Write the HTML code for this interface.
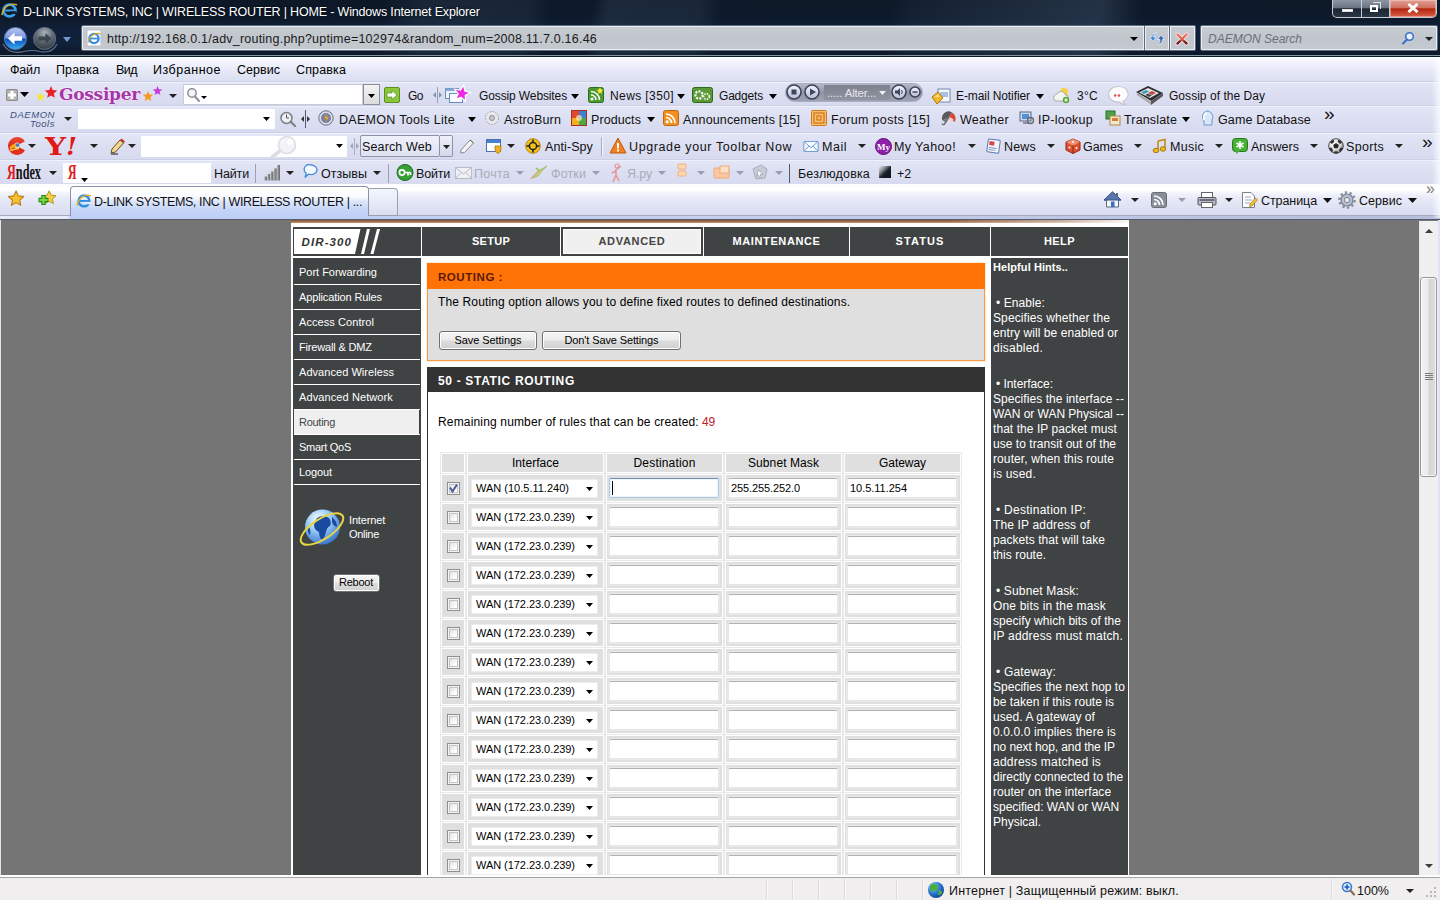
<!DOCTYPE html>
<html lang="ru"><head><meta charset="utf-8"><title>D-LINK SYSTEMS, INC | WIRELESS ROUTER | HOME</title>
<style>
html,body{margin:0;padding:0;}
body{width:1440px;height:900px;position:relative;overflow:hidden;background:#757575;font-family:"Liberation Sans","DejaVu Sans",sans-serif;font-size:12px;}
div,span.t,svg{position:absolute;box-sizing:border-box;}
span.t{white-space:pre;display:block;}

</style></head><body>
<div style="left:0px;top:0px;width:1440px;height:57px;background:linear-gradient(to bottom,#0d1827 0,#0e1b2d 20px,#10203a 30px,#10213a 44px,#0d1828 55px,#8494a2 55px,#8494a2 56px,#0d1828 56px);"></div>
<div style="left:0px;top:0px;width:1440px;height:55px;background:linear-gradient(100deg,rgba(100,125,150,0) 380px,rgba(100,125,150,.14) 420px,rgba(100,125,150,.12) 520px,rgba(100,125,150,0) 545px,rgba(100,125,150,0) 585px,rgba(100,125,150,.16) 600px,rgba(100,125,150,.14) 690px,rgba(100,125,150,0) 712px,rgba(100,125,150,0) 880px,rgba(100,125,150,.08) 900px,rgba(100,125,150,.26) 1085px,rgba(100,125,150,0) 1125px);"></div>
<span class="t" style="left:23px;top:3.5px;height:16px;line-height:16px;font-size:12.5px;color:#fff;text-shadow:0 0 3px rgba(0,0,0,.8);letter-spacing:-0.17px;">D-LINK SYSTEMS, INC | WIRELESS ROUTER | HOME - Windows Internet Explorer</span>
<svg style="left:1px;top:2px" width="17" height="17" viewBox="0 0 20 19"><circle cx="10" cy="9.5" r="7" fill="none" stroke="#3aa0e8" stroke-width="3.2"/><rect x="5" y="8.3" width="11" height="2.4" fill="#3aa0e8"/><rect x="11" y="10.5" width="7" height="3" fill="#111925"/><path d="M1 15 C3 4 12 0 19 3" stroke="#e8b020" stroke-width="1.6" fill="none"/></svg>
<div style="left:1332px;top:0px;width:105px;height:18px;border:1px solid #c4ccd8;border-top:none;border-radius:0 0 5px 5px;background:linear-gradient(to bottom,#8e96a4 0,#6a7484 45%,#1c2532 52%,#2a3646 100%);"></div>
<div style="left:1390px;top:0px;width:46px;height:17px;border-radius:0 0 4px 0;background:linear-gradient(to bottom,#e0a094 0,#d07060 45%,#b4260e 52%,#d8604a 100%);box-shadow:inset 0 0 0 1px rgba(255,220,210,.45);"></div>
<div style="left:1361px;top:0px;width:1px;height:17px;background:#c4ccd8;"></div>
<div style="left:1389px;top:0px;width:1px;height:17px;background:#c4ccd8;"></div>
<div style="left:1342px;top:9px;width:11px;height:3px;background:#fff;border:1px solid #ddd;"></div>
<div style="left:1370px;top:5px;width:8px;height:7px;border:2px solid #fff;"></div>
<div style="left:1373px;top:2px;width:8px;height:7px;border:1px solid #ddd;border-left:none;border-bottom:none;"></div>
<svg style="left:1407px;top:3px" width="12" height="10" viewBox="0 0 12 10"><path d="M1.500 1 L10.500 9 M10.500 1 L1.500 9" stroke="#fff" stroke-width="3"/></svg>
<svg style="left:0px;top:24px" width="60" height="32" viewBox="0 0 60 32"><defs><linearGradient id="gb" x1="0" y1="0" x2="0" y2="1"><stop offset="0" stop-color="#b8c6f0"/><stop offset=".47" stop-color="#8098e0"/><stop offset=".53" stop-color="#0e50c0"/><stop offset="1" stop-color="#38b0f4"/></linearGradient>
<radialGradient id="gf" cx=".5" cy=".25" r=".8"><stop offset="0" stop-color="#aab4bf"/><stop offset=".5" stop-color="#5d6671"/><stop offset="1" stop-color="#2c333c"/></radialGradient></defs>
<path d="M3 20 Q9 31 24 27.500 Q32 25.500 40 27.500 Q52 30 57 20" stroke="#5f7390" stroke-width="1.200" fill="none"/>
<circle cx="15.400" cy="14.500" r="11" fill="url(#gb)" stroke="#5878b0" stroke-width="1"/>
<path d="M8 14.500 L14.500 8.500 V12.300 H22 V16.700 H14.500 V20.500 Z" fill="#fff"/>
<circle cx="44.600" cy="14.500" r="11" fill="url(#gf)" stroke="#6a7480" stroke-width="1"/>
<path d="M51.500 14.500 L45.500 9 V12.500 H38.500 V16.500 H45.500 V20 Z" fill="#3e4650"/></svg>
<svg style="left:62.5px;top:36.5px" width="8" height="5" viewBox="0 0 8 5"><polygon points="0,0 8,0 4,5" fill="#6f9ad0"/></svg>
<div style="left:81px;top:25px;width:1064px;height:26px;background:linear-gradient(to bottom,#c8ccd3 0,#c1c6cd 50%,#c5c9d0 100%);border:1px solid #5f6a78;border-radius:2px 0 0 2px;box-shadow:inset 0 0 0 1px rgba(240,245,255,.85);"></div>
<svg style="left:86px;top:29px" width="17" height="18" viewBox="0 0 17 18"><rect x="1" y="1" width="14" height="16" fill="#fff" stroke="#b8c0cc"/><circle cx="8" cy="9.5" r="4.6" fill="none" stroke="#3a8fe0" stroke-width="2.4"/><rect x="4" y="8.6" width="8" height="1.8" fill="#3a8fe0"/><path d="M2 14 C3 7 9 3 15 5" stroke="#e0a820" stroke-width="1.2" fill="none"/></svg>
<span class="t" style="left:107px;top:31px;height:16px;line-height:16px;font-size:12.5px;color:#1a1a1a;letter-spacing:0.22px;">http://192.168.0.1/adv_routing.php?uptime=102974&amp;random_num=2008.11.7.0.16.46</span>
<svg style="left:1130px;top:37px" width="8" height="4" viewBox="0 0 8 4"><polygon points="0,0 8,0 4,4" fill="#000"/></svg>
<div style="left:1145px;top:25px;width:25px;height:26px;background:linear-gradient(to bottom,#c8ccd3 0,#c1c6cd 50%,#c5c9d0 100%);border:1px solid #5f6a78;border-left:none;box-shadow:inset 0 0 0 1px rgba(240,245,255,.85);"></div>
<div style="left:1170px;top:25px;width:26px;height:26px;background:linear-gradient(to bottom,#c8ccd3 0,#c1c6cd 50%,#c5c9d0 100%);border:1px solid #5f6a78;border-left:none;border-radius:0 2px 2px 0;box-shadow:inset 0 0 0 1px rgba(240,245,255,.85);"></div>
<svg style="left:1148px;top:30px" width="18" height="17" viewBox="0 0 18 17"><path d="M8.500 2 Q5.500 4 5.500 7 H8.500 L5 11.500 L1.500 7 H3.500 Q4 3 8.500 2z" fill="#4a8ad4" stroke="#dff0ff" stroke-width=".8"/><path d="M10 15 Q12.500 12.500 12 9.500 H9.500 L13 5 L16.500 9.500 H14.500 Q14.500 13.500 10 15z" fill="#3a66b0" stroke="#dff0ff" stroke-width=".8"/></svg>
<svg style="left:1175px;top:32px" width="14" height="14" viewBox="0 0 14 14"><defs><linearGradient id="gx" x1="0" y1="0" x2="0" y2="1"><stop offset="0" stop-color="#e87868"/><stop offset=".6" stop-color="#d86050"/><stop offset=".75" stop-color="#7a2424"/><stop offset="1" stop-color="#5a1818"/></linearGradient></defs><path d="M2.500 2.500 L11.500 11.500 M11.500 2.500 L2.500 11.500" stroke="#fbe0e0" stroke-width="4" stroke-linecap="round"/><path d="M2.500 2.500 L11.500 11.500 M11.500 2.500 L2.500 11.500" stroke="url(#gx)" stroke-width="2.400" stroke-linecap="round"/></svg>
<div style="left:1200px;top:25px;width:238px;height:26px;background:linear-gradient(to bottom,#c8ccd3 0,#c1c6cd 50%,#c5c9d0 100%);border:1px solid #5f6a78;border-radius:2px;box-shadow:inset 0 0 0 1px rgba(240,245,255,.85);"></div>
<span class="t" style="left:1208px;top:31px;height:16px;line-height:16px;font-size:12px;color:#6a6f78;font-style:italic;letter-spacing:-0.00px;">DAEMON Search</span>
<svg style="left:1401px;top:31px" width="14" height="14" viewBox="0 0 14 14"><circle cx="8.5" cy="5.5" r="3.8" fill="#e8f0ff" stroke="#3a6fc8" stroke-width="1.6"/><path d="M6 8.5 L2 12.5" stroke="#3a6fc8" stroke-width="2" stroke-linecap="round"/></svg>
<svg style="left:1425px;top:37px" width="8" height="4" viewBox="0 0 8 4"><polygon points="0,0 8,0 4,4" fill="#222"/></svg>
<div style="left:0px;top:57px;width:1440px;height:1px;background:#fbfcff;"></div>
<div style="left:0px;top:58px;width:1440px;height:24px;background:linear-gradient(to bottom,#f8f9fe 0,#eceefa 35%,#e1e4f4 75%,#dcdff1 100%);border-bottom:1px solid #cdd1e5;"></div>
<span class="t" style="left:10px;top:62px;height:16px;line-height:16px;font-size:12.5px;color:#000;letter-spacing:-0.18px;">Файл</span>
<span class="t" style="left:56px;top:62px;height:16px;line-height:16px;font-size:12.5px;color:#000;letter-spacing:0.13px;">Правка</span>
<span class="t" style="left:116px;top:62px;height:16px;line-height:16px;font-size:12.5px;color:#000;letter-spacing:-0.54px;">Вид</span>
<span class="t" style="left:153px;top:62px;height:16px;line-height:16px;font-size:12.5px;color:#000;letter-spacing:0.52px;">Избранное</span>
<span class="t" style="left:237px;top:62px;height:16px;line-height:16px;font-size:12.5px;color:#000;letter-spacing:0.03px;">Сервис</span>
<span class="t" style="left:296px;top:62px;height:16px;line-height:16px;font-size:12.5px;color:#000;letter-spacing:0.14px;">Справка</span>
<div style="left:0px;top:82px;width:1440px;height:24px;background:linear-gradient(to bottom,#e3e6f6 0,#dcdff2 50%,#d8dbef 100%);border-bottom:1px solid #ccd0e4;box-shadow:inset 0 1px 0 #eef0fb;"></div>
<div style="left:0px;top:106px;width:1440px;height:27px;background:linear-gradient(to bottom,#e3e6f6 0,#dcdff2 50%,#d8dbef 100%);border-bottom:1px solid #ccd0e4;box-shadow:inset 0 1px 0 #eef0fb;"></div>
<div style="left:0px;top:133px;width:1440px;height:27px;background:linear-gradient(to bottom,#e3e6f6 0,#dcdff2 50%,#d8dbef 100%);border-bottom:1px solid #ccd0e4;box-shadow:inset 0 1px 0 #eef0fb;"></div>
<div style="left:0px;top:160px;width:1440px;height:25px;background:linear-gradient(to bottom,#e3e6f6 0,#dcdff2 50%,#d8dbef 100%);border-bottom:1px solid #ccd0e4;box-shadow:inset 0 1px 0 #eef0fb;"></div>
<svg style="left:5px;top:87.0px" width="14" height="16" viewBox="0 0 14 16"><rect x="1" y="2" width="12" height="12" rx="1.500" fill="#8e8e8e"/><rect x="2" y="3" width="10" height="10" rx="1" fill="#b4b4b0"/><path d="M7 4 V12 M3 8 H11" stroke="#fff" stroke-width="3.200"/></svg>
<svg style="left:19.5px;top:92px" width="9" height="5" viewBox="0 0 9 5"><polygon points="0,0 9,0 4.5,5" fill="#000"/></svg>
<svg style="left:34px;top:84px" width="132" height="22" viewBox="0 0 132 22"><polygon points="6.5,8.0 7.8,11.2 11.3,11.5 8.6,13.7 9.4,17.0 6.5,15.2 3.6,17.0 4.4,13.7 1.7,11.5 5.2,11.2" fill="#f2e63a"/><polygon points="17.0,2.0 18.7,6.1 23.2,6.5 19.8,9.4 20.8,13.8 17.0,11.4 13.2,13.8 14.2,9.4 10.8,6.5 15.3,6.1" fill="#e8202a"/><polygon points="114.0,7.0 115.5,10.5 119.2,10.8 116.4,13.3 117.2,16.9 114.0,15.0 110.8,16.9 111.6,13.3 108.8,10.8 112.5,10.5" fill="#f59a20"/><polygon points="123.5,2.0 124.8,5.2 128.3,5.5 125.6,7.7 126.4,11.0 123.5,9.2 120.6,11.0 121.4,7.7 118.7,5.5 122.2,5.2" fill="#c83ae0"/></svg>
<span class="t" style="left:59px;top:83px;height:22px;line-height:22px;font-size:17px;color:#a436a8;font-family:'DejaVu Serif','Liberation Serif',serif;font-weight:bold;text-shadow:0 0 2px #fff,0 0 2px #fff,1px 1px 0 #e8b8e8;letter-spacing:-0.27px;">Gossiper</span>
<svg style="left:169px;top:94px" width="8" height="4" viewBox="0 0 8 4"><polygon points="0,0 8,0 4,4" fill="#222"/></svg>
<div style="left:183px;top:84px;width:180px;height:21px;background:#fff;border:1px solid #c8ccd8;"></div>
<svg style="left:186px;top:87.0px" width="15" height="16" viewBox="0 0 15 16"><circle cx="6" cy="6" r="4.200" fill="#f4f6f8" stroke="#8a8f98" stroke-width="1.500"/><path d="M9 9.500 L13 14" stroke="#8a8f98" stroke-width="2" stroke-linecap="round"/></svg>
<svg style="left:201px;top:95.5px" width="6" height="3" viewBox="0 0 6 3"><polygon points="0,0 6,0 3,3" fill="#000"/></svg>
<div style="left:363px;top:84px;width:17px;height:21px;background:linear-gradient(#f4f4f4,#dcdcdc);border:1px solid #8a8f98;"></div>
<svg style="left:368px;top:94px" width="7" height="4" viewBox="0 0 7 4"><polygon points="0,0 7,0 3.5,4" fill="#000"/></svg>
<svg style="left:384px;top:87.0px" width="16" height="16" viewBox="0 0 16 16"><rect x="0.500" y="0.500" width="15" height="15" rx="1.500" fill="#8cc63a" stroke="#5a9020"/><path d="M3 6 H8 V3.500 L13 8 L8 12.500 V10 H3 Z" fill="#fff" stroke="#4a8018" stroke-width=".6"/></svg>
<span class="t" style="left:408px;top:88px;height:16px;line-height:16px;font-size:12px;color:#111;letter-spacing:-0.51px;">Go</span>
<div style="left:437px;top:87px;width:1px;height:16px;background:#9aa0b8;"></div>
<svg style="left:433px;top:91px" width="9" height="8" viewBox="0 0 9 8"><polygon points="0,4 3,1 3,7" fill="#8a90a8"/><polygon points="9,4 6,1 6,7" fill="#8a90a8"/></svg>
<svg style="left:444px;top:83px" width="28" height="23" viewBox="0 0 28 23"><rect x="1.500" y="5.500" width="13" height="10" fill="#eef4fc" stroke="#6a8cc0"/><rect x="1.500" y="5.500" width="13" height="2.500" fill="#88a8d8"/><rect x="5.500" y="10.500" width="13" height="9" fill="#f8fbff" stroke="#6a8cc0"/><polygon points="18.0,2.0 20.2,7.4 26.1,7.9 21.6,11.7 23.0,17.4 18.0,14.3 13.0,17.4 14.4,11.7 9.9,7.9 15.8,7.4" fill="#f028e0" stroke="#fff" stroke-width="1.2" transform="rotate(12 18 10.5)"/></svg>
<span class="t" style="left:479px;top:88px;height:16px;line-height:16px;font-size:12px;color:#111;letter-spacing:-0.12px;">Gossip Websites</span>
<svg style="left:571px;top:93.5px" width="8" height="5" viewBox="0 0 8 5"><polygon points="0,0 8,0 4,5" fill="#000"/></svg>
<svg style="left:588px;top:87.0px" width="16" height="16" viewBox="0 0 16 16"><rect x="0.500" y="0.500" width="15" height="15" rx="2" fill="#4a9a30" stroke="#2a7018"/><circle cx="4" cy="12" r="1.600" fill="#fff"/><path d="M3 8 A5 5 0 0 1 8 13 M3 4.500 A8.500 8.500 0 0 1 11.500 13" stroke="#fff" stroke-width="1.600" fill="none"/><polygon points="12,0 13,2.500 15.500,3 13.500,4.500 14,7 12,5.500 10,7 10.500,4.500 8.500,3 11,2.500" fill="#ffe83a"/></svg>
<span class="t" style="left:610px;top:88px;height:16px;line-height:16px;font-size:12px;color:#111;letter-spacing:0.40px;">News [350]</span>
<svg style="left:677px;top:93.5px" width="8" height="5" viewBox="0 0 8 5"><polygon points="0,0 8,0 4,5" fill="#000"/></svg>
<svg style="left:692px;top:86px" width="21" height="18" viewBox="0 0 21 18"><rect x="0.500" y="1.500" width="20" height="15" rx="2" fill="#5a9838" stroke="#2f6a18"/><circle cx="7" cy="9" r="3.600" fill="none" stroke="#fff" stroke-width="2.200" stroke-dasharray="2 1.200"/><circle cx="14.500" cy="10.500" r="2.800" fill="none" stroke="#e8f4d8" stroke-width="1.800" stroke-dasharray="1.600 1"/></svg>
<span class="t" style="left:719px;top:88px;height:16px;line-height:16px;font-size:12px;color:#111;letter-spacing:-0.20px;">Gadgets</span>
<svg style="left:769px;top:93.5px" width="8" height="5" viewBox="0 0 8 5"><polygon points="0,0 8,0 4,5" fill="#000"/></svg>
<div style="left:785px;top:83px;width:138px;height:19px;border-radius:10px;background:linear-gradient(#b6bac8 0,#9095a6 50%,#9ea3b3 100%);border:1px solid #a8acbe;"></div>
<div style="left:824px;top:85px;width:66px;height:15px;background:linear-gradient(#7d828e,#8f94a0);"></div>
<svg style="left:0px;top:0px" width="1" height="1" viewBox="0 0 1 1"><defs><linearGradient id="pb" x1="0" y1="0" x2="0" y2="1"><stop offset="0" stop-color="#f4f6fc"/><stop offset=".5" stop-color="#d4d8e8"/><stop offset="1" stop-color="#b8bed4"/></linearGradient></defs></svg>
<svg style="left:786px;top:83.5px" width="16" height="16" viewBox="0 0 16 16"><circle cx="8" cy="8" r="7" fill="url(#pb)" stroke="#3a4058" stroke-width="1.500"/><rect x="5.500" y="5.500" width="5" height="5" fill="#3f4660"/></svg>
<svg style="left:804px;top:83.5px" width="16" height="16" viewBox="0 0 16 16"><circle cx="8" cy="8" r="7" fill="url(#pb)" stroke="#3a4058" stroke-width="1.500"/><polygon points="6,4.500 12,8 6,11.500" fill="#3f4660"/></svg>
<span class="t" style="left:827px;top:84.5px;height:16px;line-height:16px;font-size:11.5px;color:#e4e6ee;letter-spacing:-0.15px;">..... Alter...</span>
<svg style="left:878.5px;top:91px" width="7" height="4" viewBox="0 0 7 4"><polygon points="0,0 7,0 3.5,4" fill="#f0f0f8"/></svg>
<svg style="left:891px;top:83.5px" width="16" height="16" viewBox="0 0 16 16"><circle cx="8" cy="8" r="7" fill="url(#pb)" stroke="#3a4058" stroke-width="1.500"/><polygon points="4,6.500 6.500,6.500 9,4 9,12 6.500,9.500 4,9.500" fill="#3f4660"/><path d="M10.500 6 Q12 8 10.500 10" stroke="#3f4660" fill="none"/></svg>
<svg style="left:909px;top:86px" width="12" height="12" viewBox="0 0 12 12"><circle cx="6" cy="6" r="5" fill="url(#pb)" stroke="#3a4058" stroke-width="1.500"/><rect x="3.500" y="5.300" width="5" height="1.500" fill="#3f4660"/></svg>
<svg style="left:931px;top:86px" width="21" height="19" viewBox="0 0 21 19"><rect x="7" y="3" width="12" height="13" fill="#f4f6fa" stroke="#7088b0"/><rect x="9" y="6" width="8" height="5" fill="#a8c0e8"/><polygon points="1,11 7,6 12,12 6,18" fill="#f0b830" stroke="#b07810"/><polygon points="3,11 7,8 9,11" fill="#ffe080"/></svg>
<span class="t" style="left:956px;top:88px;height:16px;line-height:16px;font-size:12px;color:#111;letter-spacing:-0.09px;">E-mail Notifier</span>
<svg style="left:1036px;top:93.5px" width="8" height="5" viewBox="0 0 8 5"><polygon points="0,0 8,0 4,5" fill="#000"/></svg>
<svg style="left:1051px;top:86px" width="21" height="18" viewBox="0 0 21 18"><circle cx="13" cy="6" r="4" fill="#f8d040"/><path d="M3 13 a3.500 3.500 0 0 1 3-5 a4.500 4.500 0 0 1 8.500 1 a3 3 0 0 1 0 6 H5 a2.500 2.500 0 0 1 -2-2z" fill="#f4f4f4" stroke="#a8a8a8"/><circle cx="15" cy="14" r="3.200" fill="#5aa830"/><path d="M15 12.300 V15.700 M13.300 14 H16.700" stroke="#fff" stroke-width="1.200"/></svg>
<span class="t" style="left:1077px;top:88px;height:16px;line-height:16px;font-size:12px;color:#111;letter-spacing:0.29px;">3°C</span>
<svg style="left:1107px;top:85px" width="23" height="20" viewBox="0 0 23 20"><path d="M11.500 1.500 a9.500 7.800 0 0 1 4.500 14.700 q1 2.500 3 3.300 q-4 .3 -6.500 -2.500 a9.500 7.800 0 1 1 -1 -15.500z" fill="#fcfcfc" stroke="#c4c6cc" stroke-width="1.200"/><circle cx="8.200" cy="10.500" r="1.200" fill="#e04848"/><circle cx="12" cy="10.500" r="1.200" fill="#e04848"/></svg>
<svg style="left:1134px;top:84px" width="30" height="22" viewBox="0 0 30 22"><polygon points="2,8 14,2 29,9 17,17" fill="#2e2e30"/><polygon points="5,8.500 14,4 25,9 16,14" fill="#e4e4e6"/><polygon points="7,8.500 12,6 15,7.500 10,10" fill="#3a9ab0"/><polygon points="14,9 18,7 22,9 18,11" fill="#c04848"/><polygon points="11,11 15,13 18,11.500 14,9.500" fill="#4a4a50"/><polygon points="2,8 17,17 17,21 3,11" fill="#c8c8cc"/><polygon points="17,17 29,9 29,12 17,21" fill="#58585c"/><path d="M3 9.500 L17 18.500 M3 10.500 L17 20" stroke="#88888c" stroke-width=".6"/></svg>
<span class="t" style="left:1169px;top:88px;height:16px;line-height:16px;font-size:12px;color:#111;letter-spacing:0.04px;">Gossip of the Day</span>
<span class="t" style="left:10px;top:109px;height:11px;line-height:11px;font-size:9.5px;color:#3a4f7c;font-style:italic;letter-spacing:0.55px;">DAEMON</span>
<span class="t" style="left:30px;top:117.5px;height:11px;line-height:11px;font-size:9.5px;color:#3a4f7c;font-style:italic;letter-spacing:0.53px;">Tools</span>
<svg style="left:64px;top:117px" width="8" height="4" viewBox="0 0 8 4"><polygon points="0,0 8,0 4,4" fill="#222"/></svg>
<div style="left:78px;top:109px;width:197px;height:20px;background:#fff;"></div>
<svg style="left:262.5px;top:117px" width="7" height="4" viewBox="0 0 7 4"><polygon points="0,0 7,0 3.5,4" fill="#000"/></svg>
<svg style="left:279px;top:110px" width="18" height="18" viewBox="0 0 18 18"><circle cx="7.500" cy="8" r="5.500" fill="#eef0f4" stroke="#7a8088" stroke-width="1.500"/><path d="M7.500 4.500 V8 H10" stroke="#555" fill="none"/><path d="M12 12 L16 16" stroke="#7a8088" stroke-width="2.200" stroke-linecap="round"/></svg>
<div style="left:305px;top:110px;width:1px;height:18px;background:#555a70;"></div>
<svg style="left:301px;top:115px" width="9" height="8" viewBox="0 0 9 8"><polygon points="0,4 3,1 3,7" fill="#333"/><polygon points="9,4 6,1 6,7" fill="#333"/></svg>
<svg style="left:318px;top:110.0px" width="16" height="16" viewBox="0 0 16 16"><circle cx="8" cy="8" r="7.200" fill="#d8dce8" stroke="#6a7088"/><circle cx="8" cy="8" r="5" fill="#7a80a0"/><path d="M9 3 L6 8.500 H8.500 L7 13 L11 7 H8.500 Z" fill="#f0a020"/></svg>
<span class="t" style="left:339px;top:112px;height:16px;line-height:16px;font-size:12.5px;color:#111;letter-spacing:0.30px;">DAEMON Tools Lite</span>
<svg style="left:468px;top:116.5px" width="8" height="5" viewBox="0 0 8 5"><polygon points="0,0 8,0 4,5" fill="#000"/></svg>
<svg style="left:484px;top:110.0px" width="16" height="16" viewBox="0 0 16 16"><circle cx="8" cy="8" r="6.500" fill="#e8e8ec" stroke="#a8a8b0" stroke-dasharray="2 1"/><circle cx="8" cy="8" r="2.500" fill="#c8c8d0" stroke="#909098"/></svg>
<span class="t" style="left:504px;top:112px;height:16px;line-height:16px;font-size:12.5px;color:#111;letter-spacing:0.16px;">AstroBurn</span>
<svg style="left:571px;top:110.0px" width="16" height="16" viewBox="0 0 16 16"><rect x="0.500" y="0.500" width="15" height="15" fill="#e04830" stroke="#a83020"/><rect x="1" y="8" width="7" height="7" fill="#f0b020"/><rect x="8" y="8" width="7" height="7" fill="#50a840"/><rect x="8" y="1" width="7" height="7" fill="#4080d0"/><circle cx="8" cy="8" r="3" fill="#f8e8c0" opacity=".7"/></svg>
<span class="t" style="left:591px;top:112px;height:16px;line-height:16px;font-size:12.5px;color:#111;letter-spacing:0.08px;">Products</span>
<svg style="left:647px;top:116.5px" width="8" height="5" viewBox="0 0 8 5"><polygon points="0,0 8,0 4,5" fill="#000"/></svg>
<svg style="left:663px;top:110.0px" width="16" height="16" viewBox="0 0 16 16"><rect x="0.500" y="0.500" width="15" height="15" rx="2" fill="#f09020" stroke="#c06810"/><circle cx="4.200" cy="11.800" r="1.600" fill="#fff"/><path d="M3 7.500 A5.500 5.500 0 0 1 8.500 13 M3 4 A9 9 0 0 1 12 13" stroke="#fff" stroke-width="1.700" fill="none"/></svg>
<span class="t" style="left:683px;top:112px;height:16px;line-height:16px;font-size:12.5px;color:#111;letter-spacing:0.13px;">Announcements [15]</span>
<svg style="left:811px;top:110.0px" width="16" height="16" viewBox="0 0 16 16"><rect x="0.500" y="0.500" width="15" height="15" rx="1" fill="#f8c070" stroke="#d07818"/><rect x="3" y="3" width="10" height="10" fill="none" stroke="#d07818" stroke-width="1.300"/><rect x="6" y="6" width="4" height="4" fill="none" stroke="#d07818" stroke-width="1.300"/></svg>
<span class="t" style="left:831px;top:112px;height:16px;line-height:16px;font-size:12.5px;color:#111;letter-spacing:0.33px;">Forum posts [15]</span>
<svg style="left:941px;top:110.0px" width="16" height="16" viewBox="0 0 16 16"><path d="M1.500 10.500 A6.500 6.500 0 0 1 11 2.500 L8 7 Z" fill="#5a5a5e"/><path d="M11 2.500 A6.500 6.500 0 0 1 13.500 12 L8 7 Z" fill="#d84838"/><path d="M1.500 10.500 L8 7 L5 12.500 Z" fill="#7a7a80"/><rect x="8.500" y="8" width="4" height="3" fill="#f4d0c8" transform="rotate(35 10 9)"/><path d="M8 7 L3.500 14 q-1.500 1.500 -2.500 -.5" stroke="#6a6a6e" stroke-width="1.400" fill="none"/></svg>
<span class="t" style="left:960px;top:112px;height:16px;line-height:16px;font-size:12.5px;color:#111;letter-spacing:0.28px;">Weather</span>
<svg style="left:1019px;top:110.0px" width="16" height="16" viewBox="0 0 16 16"><rect x="1" y="2" width="11" height="9" fill="#c8d8f0" stroke="#5a6a88"/><rect x="3" y="4" width="7" height="5" fill="#5890d8"/><rect x="4" y="12" width="6" height="2" fill="#8890a0"/><circle cx="11.500" cy="10.500" r="3" fill="none" stroke="#666" stroke-width="1.300"/></svg>
<span class="t" style="left:1038px;top:112px;height:16px;line-height:16px;font-size:12.5px;color:#111;letter-spacing:0.24px;">IP-lookup</span>
<svg style="left:1105px;top:110.0px" width="16" height="16" viewBox="0 0 16 16"><rect x="1" y="1" width="9" height="8" fill="#50a048" stroke="#2a7028"/><rect x="5" y="6" width="10" height="9" fill="#f0e8d0" stroke="#b08840"/><rect x="7" y="8" width="6" height="3" fill="#e07830"/></svg>
<span class="t" style="left:1124px;top:112px;height:16px;line-height:16px;font-size:12.5px;color:#111;letter-spacing:0.15px;">Translate</span>
<svg style="left:1182px;top:116.5px" width="8" height="5" viewBox="0 0 8 5"><polygon points="0,0 8,0 4,5" fill="#000"/></svg>
<svg style="left:1199px;top:110.0px" width="16" height="16" viewBox="0 0 16 16"><path d="M8 1 a6 6 0 0 1 5 9 l0 5 h-8 l0 -4 a6 6 0 0 1 3 -10z" fill="#d8e8f8" stroke="#6a98c8"/><path d="M8 3 a4 5 0 0 0 -3 7" stroke="#fff" stroke-width="1.500" fill="none"/></svg>
<span class="t" style="left:1218px;top:112px;height:16px;line-height:16px;font-size:12.5px;color:#111;letter-spacing:0.15px;">Game Database</span>
<span class="t" style="left:1324px;top:105px;height:18px;line-height:18px;font-size:19px;color:#111;">»</span>
<svg style="left:7px;top:136px" width="20" height="20" viewBox="0 0 20 20"><defs><linearGradient id="yc" x1="0" y1="0" x2="0" y2="1"><stop offset="0" stop-color="#f04838"/><stop offset=".55" stop-color="#d82818"/><stop offset="1" stop-color="#e83020"/></linearGradient></defs><path d="M10 1 a9 9 0 1 0 8 13.200 L12.500 11.500 a3 3 0 1 1 0 -3.500 L18 5.500 A9 9 0 0 0 10 1z" fill="url(#yc)"/><path d="M2.500 11 q4 -4.500 9 -3 l1.500 1.500 q-1 1.500 -3 1.500 q-4 0 -7 2.500z" fill="#f8b020"/><path d="M3 14.500 q5 -1.500 9 -2" stroke="#f8d040" stroke-width="1.400" fill="none"/><circle cx="10.500" cy="9" r="1.800" fill="#4878c0"/></svg>
<svg style="left:28px;top:144px" width="8" height="4" viewBox="0 0 8 4"><polygon points="0,0 8,0 4,4" fill="#222"/></svg>
<svg style="left:44px;top:135px" width="36" height="23" viewBox="0 0 36 23"><text x="1" y="19.500" font-family="DejaVu Serif,Liberation Serif,serif" font-weight="bold" font-size="24" fill="#e01818" textLength="21" lengthAdjust="spacingAndGlyphs">Y</text><text x="22" y="19.500" font-family="DejaVu Serif,Liberation Serif,serif" font-weight="bold" font-style="italic" font-size="24" fill="#e01818" textLength="11" lengthAdjust="spacingAndGlyphs">!</text></svg>
<svg style="left:90px;top:144px" width="8" height="4" viewBox="0 0 8 4"><polygon points="0,0 8,0 4,4" fill="#222"/></svg>
<svg style="left:109px;top:137px" width="18" height="18" viewBox="0 0 18 18"><polygon points="3,12 11,3 14.500,6 6.500,15 2,16" fill="#f0d890" stroke="#6a5020" stroke-width="1"/><polygon points="11,3 12.500,1.500 16,4.500 14.500,6" fill="#c03030"/><path d="M2 17 H9" stroke="#333" stroke-width="1.200"/></svg>
<svg style="left:128px;top:144px" width="8" height="4" viewBox="0 0 8 4"><polygon points="0,0 8,0 4,4" fill="#222"/></svg>
<div style="left:141px;top:136px;width:206px;height:21px;background:#fff;"></div>
<svg style="left:268px;top:136px" width="34" height="21" viewBox="0 0 34 21"><circle cx="19" cy="9" r="8.500" fill="#f2f3f6" stroke="#dcdde4" stroke-width="1.500"/><path d="M12 15 L4 21" stroke="#dcdde4" stroke-width="3.500" stroke-linecap="round"/><circle cx="22" cy="6" r="3" fill="#fff"/></svg>
<svg style="left:335.5px;top:144px" width="7" height="4" viewBox="0 0 7 4"><polygon points="0,0 7,0 3.5,4" fill="#000"/></svg>
<div style="left:354px;top:138px;width:1px;height:17px;background:#a8acc0;"></div>
<svg style="left:350px;top:142px" width="9" height="8" viewBox="0 0 9 8"><polygon points="0,4 3,1 3,7" fill="#a0a4b8"/><polygon points="9,4 6,1 6,7" fill="#a0a4b8"/></svg>
<div style="left:360px;top:135px;width:80px;height:22px;border:1px solid #8d93a8;border-radius:2px;background:linear-gradient(#eef0fa,#dfe2f2);"></div>
<div style="left:440px;top:135px;width:13px;height:22px;border:1px solid #8d93a8;border-left:none;border-radius:0 2px 2px 0;background:linear-gradient(#eef0fa,#d4d7e8);"></div>
<span class="t" style="left:362px;top:139px;height:16px;line-height:16px;font-size:12.5px;color:#111;letter-spacing:0.14px;">Search Web</span>
<svg style="left:443px;top:145px" width="7" height="4" viewBox="0 0 7 4"><polygon points="0,0 7,0 3.5,4" fill="#222"/></svg>
<svg style="left:459px;top:137px" width="17" height="17" viewBox="0 0 17 17"><polygon points="2,13 11,3 14.500,6 5.500,15.500 1.500,16" fill="#f4f4f6" stroke="#8a8a92" stroke-width="1"/><path d="M11 3 L14.500 6" stroke="#666"/></svg>
<svg style="left:486px;top:138.0px" width="16" height="16" viewBox="0 0 16 16"><rect x="0.500" y="1.500" width="14" height="12" fill="#fff" stroke="#4a70b0"/><rect x="1" y="2" width="13" height="3" fill="#4a80d0"/><path d="M9 8 h6 v3 q0 3 -3 4.500 q-3 -1.500 -3 -4.500z" fill="#f0b020" stroke="#b07810" stroke-width=".8"/></svg>
<svg style="left:507px;top:144px" width="8" height="4" viewBox="0 0 8 4"><polygon points="0,0 8,0 4,4" fill="#222"/></svg>
<svg style="left:525px;top:138.0px" width="16" height="16" viewBox="0 0 16 16"><circle cx="8" cy="8" r="7.300" fill="#f4c020" stroke="#b88810"/><circle cx="8" cy="8" r="3.600" fill="none" stroke="#222" stroke-width="1.500"/><path d="M8 1.500 V5 M8 11 V14.500 M1.500 8 H5 M11 8 H14.500" stroke="#222" stroke-width="1.500"/></svg>
<span class="t" style="left:545px;top:139px;height:16px;line-height:16px;font-size:12.5px;color:#111;letter-spacing:0.09px;">Anti-Spy</span>
<div style="left:601px;top:137px;width:1px;height:19px;background:#a8acc0;"></div>
<div style="left:602px;top:137px;width:1px;height:19px;background:#f4f5fc;"></div>
<svg style="left:609px;top:137px" width="18" height="17" viewBox="0 0 18 17"><polygon points="9,1 17,16 1,16" fill="#f08020" stroke="#c05808" stroke-linejoin="round"/><rect x="8" y="6" width="2" height="5.500" fill="#fff"/><rect x="8" y="12.500" width="2" height="2" fill="#fff"/></svg>
<span class="t" style="left:629px;top:139px;height:16px;line-height:16px;font-size:12.5px;color:#111;letter-spacing:0.61px;">Upgrade your Toolbar Now</span>
<svg style="left:803px;top:141px" width="16" height="11" viewBox="0 0 18 13"><rect x="0.500" y="0.500" width="17" height="12" rx="1" fill="#f4f8ff" stroke="#5a88c8"/><path d="M1 1 L9 8 L17 1 M1 12 L6.500 6 M17 12 L11.500 6" stroke="#5a88c8" fill="none"/></svg>
<span class="t" style="left:822px;top:139px;height:16px;line-height:16px;font-size:12.5px;color:#111;letter-spacing:0.52px;">Mail</span>
<svg style="left:858px;top:144px" width="8" height="4" viewBox="0 0 8 4"><polygon points="0,0 8,0 4,4" fill="#222"/></svg>
<svg style="left:875px;top:138px" width="17" height="17" viewBox="0 0 17 17"><circle cx="8.500" cy="8.500" r="8" fill="#9020a8" stroke="#60107a"/><text x="8.500" y="12" font-size="9" font-weight="bold" fill="#fff" text-anchor="middle" font-family="Liberation Serif,serif">My</text></svg>
<span class="t" style="left:894px;top:139px;height:16px;line-height:16px;font-size:12.5px;color:#111;letter-spacing:0.38px;">My Yahoo!</span>
<svg style="left:968px;top:144px" width="8" height="4" viewBox="0 0 8 4"><polygon points="0,0 8,0 4,4" fill="#222"/></svg>
<svg style="left:985px;top:138.0px" width="16" height="16" viewBox="0 0 16 16"><rect x="2.500" y="1.500" width="12" height="13" rx="1" transform="rotate(8 8 8)" fill="#f4f6fb" stroke="#5a78b0"/><rect x="4" y="3.500" width="5" height="4" fill="#d84848" transform="rotate(8 8 8)"/><path d="M4 10 H12 M4 12 H11" stroke="#7a90c0" transform="rotate(8 8 8)"/></svg>
<span class="t" style="left:1004px;top:139px;height:16px;line-height:16px;font-size:12.5px;color:#111;letter-spacing:0.18px;">News</span>
<svg style="left:1047px;top:144px" width="8" height="4" viewBox="0 0 8 4"><polygon points="0,0 8,0 4,4" fill="#222"/></svg>
<svg style="left:1065px;top:138.0px" width="16" height="16" viewBox="0 0 16 16"><polygon points="8,1 15,4 15,12 8,15.500 1,12 1,4" fill="#e05030" stroke="#902818"/><polygon points="8,1 15,4 8,7.500 1,4" fill="#f09070"/><path d="M8 7.500 V15.500" stroke="#902818"/><circle cx="4.500" cy="9.500" r="1" fill="#fff"/><circle cx="11.500" cy="10" r="1" fill="#fff"/><circle cx="8" cy="4" r="1" fill="#fff"/></svg>
<span class="t" style="left:1083px;top:139px;height:16px;line-height:16px;font-size:12.5px;color:#111;letter-spacing:-0.06px;">Games</span>
<svg style="left:1134px;top:144px" width="8" height="4" viewBox="0 0 8 4"><polygon points="0,0 8,0 4,4" fill="#222"/></svg>
<svg style="left:1152px;top:138.0px" width="16" height="16" viewBox="0 0 16 16"><path d="M6 3 L13 1.500 V11" stroke="#c08810" stroke-width="1.500" fill="none"/><path d="M6 3 V12.500" stroke="#c08810" stroke-width="1.500"/><ellipse cx="4" cy="12.500" rx="2.800" ry="2.200" fill="#f0b820" stroke="#a87810"/><ellipse cx="11" cy="11" rx="2.800" ry="2.200" fill="#f0b820" stroke="#a87810"/></svg>
<span class="t" style="left:1170px;top:139px;height:16px;line-height:16px;font-size:12.5px;color:#111;letter-spacing:0.27px;">Music</span>
<svg style="left:1215px;top:144px" width="8" height="4" viewBox="0 0 8 4"><polygon points="0,0 8,0 4,4" fill="#222"/></svg>
<svg style="left:1232px;top:138.0px" width="16" height="16" viewBox="0 0 16 16"><rect x="0.500" y="0.500" width="15" height="13" rx="3" fill="#48b038" stroke="#287818"/><polygon points="4,13 4,16 8,13" fill="#48b038"/><path d="M8 3 V11 M4.500 5 L11.500 9 M11.500 5 L4.500 9" stroke="#fff" stroke-width="1.600"/></svg>
<span class="t" style="left:1251px;top:139px;height:16px;line-height:16px;font-size:12.5px;color:#111;letter-spacing:0.01px;">Answers</span>
<svg style="left:1310px;top:144px" width="8" height="4" viewBox="0 0 8 4"><polygon points="0,0 8,0 4,4" fill="#222"/></svg>
<svg style="left:1328px;top:138.0px" width="16" height="16" viewBox="0 0 16 16"><defs><radialGradient id="sb" cx=".35" cy=".3" r=".8"><stop offset="0" stop-color="#ffffff"/><stop offset=".6" stop-color="#d8d8d8"/><stop offset="1" stop-color="#707070"/></radialGradient></defs><circle cx="8" cy="8" r="7.300" fill="url(#sb)" stroke="#3a3a3a" stroke-width=".9"/><polygon points="8,5 10.800,7 9.800,10.300 6.200,10.300 5.200,7" fill="#262626"/><path d="M2 4.500 q1.500 -2 3.500 -2.800 l1 1.800 -2.500 2.500z M14 4.500 q-1.500 -2 -3.500 -2.800 l-1 1.800 2.500 2.500z M1 10 l2.500 -.5 1.500 3 -1 1.500 q-2 -1.500 -3 -4z M15 10 l-2.500 -.5 -1.500 3 1 1.500 q2 -1.500 3 -4z M6 14 l2 -1 2 1 -.5 1.200 q-1.500 .4 -3 0z" fill="#303030"/></svg>
<span class="t" style="left:1346px;top:139px;height:16px;line-height:16px;font-size:12.5px;color:#111;letter-spacing:0.31px;">Sports</span>
<svg style="left:1395px;top:144px" width="8" height="4" viewBox="0 0 8 4"><polygon points="0,0 8,0 4,4" fill="#222"/></svg>
<span class="t" style="left:1422px;top:133px;height:18px;line-height:18px;font-size:19px;color:#111;">»</span>
<svg style="left:6px;top:162px" width="38" height="22" viewBox="0 0 38 22"><text x="1" y="17" font-family="Liberation Serif,serif" font-weight="bold" font-size="20" textLength="34" lengthAdjust="spacingAndGlyphs"><tspan fill="#e01818">Я</tspan><tspan fill="#111">ndex</tspan></text></svg>
<svg style="left:49px;top:171px" width="8" height="4" viewBox="0 0 8 4"><polygon points="0,0 8,0 4,4" fill="#222"/></svg>
<div style="left:63px;top:163px;width:148px;height:20px;background:#fff;"></div>
<svg style="left:67px;top:162px" width="12" height="22" viewBox="0 0 12 22"><text x="1" y="17" font-family="Liberation Serif,serif" font-weight="bold" font-size="20" fill="#e01818" textLength="8.500" lengthAdjust="spacingAndGlyphs">Я</text></svg>
<svg style="left:81px;top:178px" width="7" height="4" viewBox="0 0 7 4"><polygon points="0,0 7,0 3.5,4" fill="#000"/></svg>
<span class="t" style="left:214px;top:166px;height:16px;line-height:16px;font-size:12.5px;color:#111;letter-spacing:-0.13px;">Найти</span>
<div style="left:255px;top:164px;width:1px;height:19px;background:#9aa0b8;"></div>
<svg style="left:264px;top:164px" width="17" height="17" viewBox="0 0 17 17"><defs><linearGradient id="sg" x1="0" y1="0" x2="1" y2="0"><stop offset="0" stop-color="#a0a0a0"/><stop offset="1" stop-color="#6a6a6a"/></linearGradient></defs><g fill="url(#sg)"><rect x="0.500" y="12.500" width="2.600" height="4"/><rect x="3.700" y="10" width="2.600" height="6.500"/><rect x="6.900" y="7.500" width="2.600" height="9"/><rect x="10.100" y="4.500" width="2.600" height="12"/><rect x="13.300" y="1" width="2.700" height="15.500"/></g></svg>
<svg style="left:286px;top:171px" width="8" height="4" viewBox="0 0 8 4"><polygon points="0,0 8,0 4,4" fill="#222"/></svg>
<svg style="left:303px;top:164px" width="15" height="15" viewBox="0 0 15 15"><path d="M8 1 a6 4.800 0 0 1 0 9.600 q-1.300 0 -2.600 -.4 L2 13.500 L3.300 9.300 a4.800 4.800 0 0 1 4.700 -8.300z" fill="#f4f9ff" stroke="#4a8ad8" stroke-width="1.300"/></svg>
<span class="t" style="left:321px;top:166px;height:16px;line-height:16px;font-size:12.5px;color:#111;letter-spacing:0.03px;">Отзывы</span>
<svg style="left:373px;top:171px" width="8" height="4" viewBox="0 0 8 4"><polygon points="0,0 8,0 4,4" fill="#222"/></svg>
<div style="left:388px;top:164px;width:1px;height:19px;background:#9aa0b8;"></div>
<svg style="left:396px;top:164px" width="18" height="17" viewBox="0 0 18 17"><circle cx="9" cy="8.500" r="8" fill="#38a038" stroke="#1a6818"/><circle cx="6" cy="8.500" r="2.600" fill="none" stroke="#fff" stroke-width="1.700"/><path d="M8.500 8.500 H14.500 M12 8.500 V11.500 M14.500 8.500 V11" stroke="#fff" stroke-width="1.700" fill="none"/></svg>
<span class="t" style="left:416px;top:166px;height:16px;line-height:16px;font-size:12.5px;color:#111;letter-spacing:-0.20px;">Войти</span>
<svg style="left:455px;top:167px" width="17" height="12" viewBox="0 0 17 12"><rect x="0.500" y="0.500" width="16" height="11" fill="#f0f1f6" stroke="#b8bcc8"/><path d="M1 1 L8.500 7 L16 1 M1 11 L6 5.500 M16 11 L11 5.500" stroke="#b8bcc8" fill="none"/></svg>
<span class="t" style="left:474px;top:166px;height:16px;line-height:16px;font-size:12.5px;color:#a9adb8;letter-spacing:0.26px;">Почта</span>
<svg style="left:516px;top:171px" width="8" height="4" viewBox="0 0 8 4"><polygon points="0,0 8,0 4,4" fill="#9a9eac"/></svg>
<svg style="left:530px;top:164px" width="19" height="17" viewBox="0 0 19 17"><path d="M2 14 L8 7 L6 4 L10 6 L17 2 L11 8 L8 12 Z" fill="#b8d878" stroke="#98b858" stroke-width=".8"/><path d="M1 15 Q6 9 10 6" stroke="#e8a090" stroke-width="1.300" fill="none"/></svg>
<span class="t" style="left:551px;top:166px;height:16px;line-height:16px;font-size:12.5px;color:#a9adb8;letter-spacing:0.13px;">Фотки</span>
<svg style="left:592px;top:171px" width="8" height="4" viewBox="0 0 8 4"><polygon points="0,0 8,0 4,4" fill="#9a9eac"/></svg>
<svg style="left:609px;top:163px" width="14" height="20" viewBox="0 0 14 20"><circle cx="8" cy="3" r="2" fill="none" stroke="#e89090" stroke-width="1.200"/><path d="M7 6 V12 L4 19 M7 12 L10 18 M7 7 L12 3 M7 8 L3 10" stroke="#e89090" stroke-width="1.400" fill="none"/></svg>
<span class="t" style="left:627px;top:166px;height:16px;line-height:16px;font-size:12.5px;color:#a9adb8;letter-spacing:-0.14px;">Я.ру</span>
<svg style="left:658px;top:171px" width="8" height="4" viewBox="0 0 8 4"><polygon points="0,0 8,0 4,4" fill="#9a9eac"/></svg>
<svg style="left:676px;top:163px" width="13" height="17" viewBox="0 0 13 17"><rect x="2" y="1" width="8" height="5" rx="1" fill="#fbd8b0" stroke="#f0b080"/><rect x="2" y="8" width="8" height="5" rx="1" fill="#fbd8b0" stroke="#f0b080"/></svg>
<svg style="left:697px;top:171px" width="8" height="4" viewBox="0 0 8 4"><polygon points="0,0 8,0 4,4" fill="#9a9eac"/></svg>
<svg style="left:713px;top:165px" width="18" height="15" viewBox="0 0 18 15"><rect x="1" y="3" width="15" height="10" rx="1" fill="#f8c8a0" stroke="#f0a878"/><rect x="7" y="1" width="9" height="7" fill="#fbe0c8" stroke="#f0a878"/></svg>
<svg style="left:736px;top:171px" width="8" height="4" viewBox="0 0 8 4"><polygon points="0,0 8,0 4,4" fill="#9a9eac"/></svg>
<svg style="left:751px;top:164px" width="18" height="17" viewBox="0 0 18 17"><polygon points="2,5 10,1 16,5 14,14 5,15" fill="#c8ccd8" stroke="#a8acb8"/><polygon points="7,6 12,10 9,10.500 10.500,13.500 9,14 7.500,11 6,12.500" fill="#fff" stroke="#8a8e9a" stroke-width=".6"/></svg>
<svg style="left:775px;top:171px" width="8" height="4" viewBox="0 0 8 4"><polygon points="0,0 8,0 4,4" fill="#9a9eac"/></svg>
<div style="left:789px;top:164px;width:1px;height:19px;background:#555a6a;"></div>
<span class="t" style="left:798px;top:166px;height:16px;line-height:16px;font-size:12.5px;color:#111;letter-spacing:0.15px;">Безлюдовка</span>
<div style="left:879px;top:166px;width:12px;height:12px;background:linear-gradient(135deg,#e8ecf0 0,#8a9298 30%,#1a222a 55%,#0c1218 100%);"></div>
<span class="t" style="left:897px;top:166px;height:16px;line-height:16px;font-size:12.5px;color:#111;letter-spacing:-0.13px;">+2</span>
<div style="left:0px;top:184px;width:1440px;height:36px;background:linear-gradient(to bottom,#fdfdff 0,#ffffff 6px,#f0f2fb 10px,#e6e9f7 15px,#d9ddf1 31px);"></div>
<div style="left:0px;top:215px;width:1440px;height:5px;background:linear-gradient(to right,#e6e9f7 0,#e6e9f7 68px,#bfd0f7 70px,#bfd0f7 400px,#c6cfec 700px,#b6bedb 1440px);border-top:1px solid #a4aac0;border-bottom:1px solid #565c6e;"></div>
<svg style="left:8px;top:190px" width="18" height="17" viewBox="0 0 18 17"><polygon points="9,1 11.500,6.500 17.500,7.200 13,11.200 14.300,17 9,14 3.700,17 5,11.200 0.500,7.200 6.500,6.500" fill="#f8c030" stroke="#b87c10" stroke-width="1.200" stroke-linejoin="round" transform="scale(.9)"/></svg>
<svg style="left:38px;top:190px" width="19" height="18" viewBox="0 0 19 18"><polygon points="9,1 11.500,6.500 17.500,7.200 13,11.200 14.300,17 9,14 3.700,17 5,11.200 0.500,7.200 6.500,6.500" fill="#f8d048" stroke="#b89018" stroke-width="1.200" stroke-linejoin="round" transform="translate(4,0) scale(.8)"/><path d="M5.500 5 V15 M0.500 10 H10.500" stroke="#2a8818" stroke-width="4.400"/><path d="M5.500 6 V14 M1.500 10 H9.500" stroke="#78d848" stroke-width="2.200"/></svg>
<div style="left:70px;top:186px;width:299px;height:30px;border:1px solid #8a91a8;border-bottom:none;border-radius:4px 4px 0 0;background:linear-gradient(to bottom,#ffffff 0,#f8faff 35%,#dce6fb 50%,#c4d4f8 80%,#bfd0f7 100%);"></div>
<svg style="left:76px;top:192px" width="16" height="17" viewBox="0 0 18 18"><circle cx="9" cy="9.500" r="6" fill="none" stroke="#2f8fe0" stroke-width="3"/><rect x="4" y="8.400" width="10" height="2.200" fill="#2f8fe0"/><rect x="10" y="10.600" width="7" height="2.600" fill="#e6ebf8"/><path d="M1 15 C3 5 11 1 17 4" stroke="#e8b020" stroke-width="1.500" fill="none"/></svg>
<span class="t" style="left:94px;top:194px;height:16px;line-height:16px;font-size:12.5px;color:#111;letter-spacing:-0.38px;">D-LINK SYSTEMS, INC | WIRELESS ROUTER | ...</span>
<div style="left:369px;top:188px;width:29px;height:28px;border:1px solid #9aa0b4;border-left:none;border-radius:0 4px 0 0;background:linear-gradient(to bottom,#f4f6fd 0,#e9ecf9 45%,#dadef0 100%);"></div>
<svg style="left:1103px;top:190px" width="19" height="19" viewBox="0 0 19 19"><polygon points="9.500,2 18,10 15.500,10 15.500,17 3.500,17 3.500,10 1,10" fill="#f4f6fa" stroke="#5a6a88" stroke-linejoin="round"/><polygon points="9.500,2 18,10 1,10" fill="#5878b0" stroke="#3a5080" stroke-linejoin="round"/><rect x="8" y="11.500" width="3.500" height="5.500" fill="#3a70c0"/><rect x="13" y="3" width="2" height="4" fill="#5a6a88"/></svg>
<svg style="left:1131px;top:198px" width="8" height="4" viewBox="0 0 8 4"><polygon points="0,0 8,0 4,4" fill="#222"/></svg>
<svg style="left:1151px;top:192.0px" width="16" height="16" viewBox="0 0 16 16"><rect x="0.500" y="0.500" width="15" height="15" rx="2" fill="#8a8e98" stroke="#6a6e78"/><circle cx="4.200" cy="11.800" r="1.600" fill="#fff"/><path d="M3 7.500 A5.500 5.500 0 0 1 8.500 13 M3 4 A9 9 0 0 1 12 13" stroke="#fff" stroke-width="1.700" fill="none"/></svg>
<svg style="left:1178px;top:198px" width="8" height="4" viewBox="0 0 8 4"><polygon points="0,0 8,0 4,4" fill="#9a9eac"/></svg>
<svg style="left:1197px;top:191px" width="20" height="18" viewBox="0 0 20 18"><rect x="4.500" y="1.500" width="11" height="6" fill="#fff" stroke="#666"/><rect x="1" y="6.500" width="18" height="7.500" rx="1" fill="#b8bcc8" stroke="#555"/><rect x="4.500" y="11.500" width="11" height="5" fill="#fff" stroke="#666"/><rect x="2.500" y="8" width="15" height="2" fill="#6a6e7a"/></svg>
<svg style="left:1225px;top:198px" width="8" height="4" viewBox="0 0 8 4"><polygon points="0,0 8,0 4,4" fill="#222"/></svg>
<svg style="left:1240px;top:191px" width="18" height="18" viewBox="0 0 18 18"><path d="M2.500 1.500 H11 L14.500 5 V16.500 H2.500 Z" fill="#fff" stroke="#7a8088"/><path d="M5 6 H11 M5 9 H12 M5 12 H10" stroke="#98a8c8"/><polygon points="10,13 15.500,7 17.500,9 12,15 9.500,15.500" fill="#f0c040" stroke="#a07810" stroke-width=".7"/></svg>
<span class="t" style="left:1261px;top:193px;height:16px;line-height:16px;font-size:12.5px;color:#111;letter-spacing:-0.08px;">Страница</span>
<svg style="left:1322.5px;top:197.5px" width="9" height="5" viewBox="0 0 9 5"><polygon points="0,0 9,0 4.5,5" fill="#111"/></svg>
<svg style="left:1338px;top:191px" width="18" height="18" viewBox="0 0 18 18"><circle cx="9" cy="9" r="6" fill="#b8c0cc" stroke="#7a8290" stroke-width="1.200"/><circle cx="9" cy="9" r="7.500" fill="none" stroke="#8a92a0" stroke-width="2.600" stroke-dasharray="2.400 2.300"/><circle cx="9" cy="9" r="2.600" fill="#e8ecf4" stroke="#7a8290"/></svg>
<span class="t" style="left:1359px;top:193px;height:16px;line-height:16px;font-size:12.5px;color:#111;letter-spacing:0.03px;">Сервис</span>
<svg style="left:1407.5px;top:197.5px" width="9" height="5" viewBox="0 0 9 5"><polygon points="0,0 9,0 4.5,5" fill="#111"/></svg>
<span class="t" style="left:1426px;top:183px;height:12px;line-height:12px;font-size:16px;color:#777;">»</span>
<div style="left:1432px;top:58px;width:8px;height:160px;background:linear-gradient(to right,rgba(255,255,255,0),rgba(255,255,255,.75));"></div>
<div style="left:0px;top:220px;width:1440px;height:656px;background:#757575;"></div>
<div style="left:0px;top:220px;width:1px;height:656px;background:#dfe3f3;"></div>
<div style="left:1438px;top:220px;width:2px;height:656px;background:#dfe3f3;"></div>
<div style="left:291px;top:220px;width:838px;height:656px;background:#fff;"></div>
<div style="left:291px;top:220px;width:838px;height:3px;background:linear-gradient(to right,rgba(255,255,255,0) 0,rgba(255,255,255,0) 78%,rgba(255,255,255,.5) 92%,rgba(255,255,255,.95) 100%),linear-gradient(to bottom,#7e5640 0,#a06c4c 50%,#cf9a70 100%);"></div>
<div style="left:292.5px;top:227px;width:128.5px;height:29px;background:#404343;"></div>
<svg style="left:293px;top:227px" width="128" height="29" viewBox="0 0 128 29"><polygon points="1,2 67.500,2 62,27 1,27" fill="#fff"/><polygon points="74,2 77,2 71,27 68,27" fill="#fff"/><polygon points="84,2 87,2 80.500,27 77.500,27" fill="#fff"/><text x="8.500" y="19.300" font-family="Liberation Sans,sans-serif" font-size="11.500" font-weight="bold" font-style="italic" fill="#333" textLength="49.500" lengthAdjust="spacing">DIR-300</text></svg>
<div style="left:422px;top:227px;width:138px;height:29px;background:#404343;"></div>
<span class="t" style="left:472.0px;top:232.5px;height:16px;line-height:16px;font-size:11px;color:#fff;font-weight:bold;letter-spacing:0.26px;">SETUP</span>
<div style="left:561px;top:227px;width:142px;height:29px;background:#f0f0f0;border:2px solid #404343;box-shadow:inset 0 0 0 1px #fff;"></div>
<span class="t" style="left:598.5px;top:232.5px;height:16px;line-height:16px;font-size:11px;color:#444;font-weight:bold;letter-spacing:0.68px;">ADVANCED</span>
<div style="left:704px;top:227px;width:145px;height:29px;background:#404343;"></div>
<span class="t" style="left:732.5px;top:232.5px;height:16px;line-height:16px;font-size:11px;color:#fff;font-weight:bold;letter-spacing:0.61px;">MAINTENANCE</span>
<div style="left:850px;top:227px;width:140px;height:29px;background:#404343;"></div>
<span class="t" style="left:895.5px;top:232.5px;height:16px;line-height:16px;font-size:11px;color:#fff;font-weight:bold;letter-spacing:1.10px;">STATUS</span>
<div style="left:991px;top:227px;width:137px;height:29px;background:#404343;"></div>
<span class="t" style="left:1044.0px;top:232.5px;height:16px;line-height:16px;font-size:11px;color:#fff;font-weight:bold;letter-spacing:0.41px;">HELP</span>
<div style="left:292.5px;top:258px;width:128.5px;height:618px;background:#404343;"></div>
<span class="t" style="left:299px;top:264px;height:16px;line-height:16px;font-size:11px;color:#fff;letter-spacing:-0.02px;">Port Forwarding</span>
<div style="left:294px;top:284px;width:126px;height:1px;background:#fff;"></div>
<span class="t" style="left:299px;top:289px;height:16px;line-height:16px;font-size:11px;color:#fff;letter-spacing:-0.12px;">Application Rules</span>
<div style="left:294px;top:309px;width:126px;height:1px;background:#fff;"></div>
<span class="t" style="left:299px;top:314px;height:16px;line-height:16px;font-size:11px;color:#fff;letter-spacing:0.07px;">Access Control</span>
<div style="left:294px;top:334px;width:126px;height:1px;background:#fff;"></div>
<span class="t" style="left:299px;top:339px;height:16px;line-height:16px;font-size:11px;color:#fff;letter-spacing:-0.16px;">Firewall &amp; DMZ</span>
<div style="left:294px;top:359px;width:126px;height:1px;background:#fff;"></div>
<span class="t" style="left:299px;top:364px;height:16px;line-height:16px;font-size:11px;color:#fff;letter-spacing:0.05px;">Advanced Wireless</span>
<div style="left:294px;top:384px;width:126px;height:1px;background:#fff;"></div>
<span class="t" style="left:299px;top:389px;height:16px;line-height:16px;font-size:11px;color:#fff;letter-spacing:0.10px;">Advanced Network</span>
<div style="left:294px;top:409px;width:126px;height:1px;background:#fff;"></div>
<div style="left:294px;top:410px;width:125px;height:24px;background:#efefef;"></div>
<span class="t" style="left:299px;top:414px;height:16px;line-height:16px;font-size:11px;color:#444;letter-spacing:-0.27px;">Routing</span>
<div style="left:294px;top:434px;width:126px;height:1px;background:#fff;"></div>
<span class="t" style="left:299px;top:439px;height:16px;line-height:16px;font-size:11px;color:#fff;letter-spacing:-0.27px;">Smart QoS</span>
<div style="left:294px;top:459px;width:126px;height:1px;background:#fff;"></div>
<span class="t" style="left:299px;top:464px;height:16px;line-height:16px;font-size:11px;color:#fff;letter-spacing:-0.11px;">Logout</span>
<div style="left:294px;top:484px;width:126px;height:1px;background:#fff;"></div>
<svg style="left:298px;top:507px" width="48" height="44" viewBox="0 0 48 44"><defs><radialGradient id="gl" cx=".38" cy=".28" r=".8"><stop offset="0" stop-color="#ffffff"/><stop offset=".4" stop-color="#9ccdfa"/><stop offset="1" stop-color="#2a68c8"/></radialGradient></defs>
<circle cx="24.500" cy="20" r="17.500" fill="url(#gl)"/>
<path d="M19 11 q6 -4 12 0 q3 4 1 8 q-3 1 -4 6 q-1 5 -4 8 q-3 -3 -3 -8 q-5 -2 -5 -7 q1 -5 3 -7z" fill="#1a4aa0"/><path d="M34 10 q5 4 5 10 q-4 -1 -5 -5z" fill="#1a4aa0"/><path d="M11 20 q2 3 1 8 q-4 -4 -1 -8z" fill="#1a4aa0"/>
<ellipse cx="24" cy="22" rx="24.500" ry="10" transform="rotate(-33 24 22)" fill="none" stroke="#e8d440" stroke-width="2"/></svg>
<span class="t" style="left:349px;top:512px;height:16px;line-height:16px;font-size:11px;color:#fff;letter-spacing:-0.16px;">Internet</span>
<span class="t" style="left:349px;top:526px;height:16px;line-height:16px;font-size:11px;color:#fff;letter-spacing:-0.30px;">Online</span>
<div style="left:333px;top:574px;width:47px;height:18px;background:linear-gradient(#f5f5f5 0,#ebebeb 48%,#dddddd 52%,#d0d0d0 100%);border:1px solid #707070;border-radius:3px;box-shadow:inset 0 0 0 1px #fff;"></div>
<span class="t" style="left:339px;top:574px;height:16px;line-height:16px;font-size:11px;color:#000;letter-spacing:-0.25px;">Reboot</span>
<div style="left:427px;top:263px;width:558px;height:98px;background:#dfdfdf;border:1px solid #f89a48;box-shadow:0 0 0 1px #ffeedd;"></div>
<div style="left:427px;top:263px;width:558px;height:26px;background:#ff7306;"></div>
<span class="t" style="left:438px;top:268.5px;height:16px;line-height:16px;font-size:11.5px;color:#5a1a08;font-weight:bold;letter-spacing:0.55px;">ROUTING :</span>
<span class="t" style="left:438px;top:294px;height:16px;line-height:16px;font-size:12px;color:#000;letter-spacing:0.13px;">The Routing option allows you to define fixed routes to defined destinations.</span>
<div style="left:439px;top:331px;width:98px;height:19px;background:linear-gradient(#f5f5f5 0,#ebebeb 48%,#dddddd 52%,#d0d0d0 100%);border:1px solid #707070;border-radius:3px;box-shadow:inset 0 0 0 1px #fff;"></div>
<span class="t" style="left:454.5px;top:331.5px;height:16px;line-height:16px;font-size:11px;color:#000;letter-spacing:-0.07px;">Save Settings</span>
<div style="left:542px;top:331px;width:139px;height:19px;background:linear-gradient(#f5f5f5 0,#ebebeb 48%,#dddddd 52%,#d0d0d0 100%);border:1px solid #707070;border-radius:3px;box-shadow:inset 0 0 0 1px #fff;"></div>
<span class="t" style="left:564.5px;top:331.5px;height:16px;line-height:16px;font-size:11px;color:#000;letter-spacing:-0.12px;">Don&#x27;t Save Settings</span>
<div style="left:427px;top:367px;width:558px;height:520px;background:#fff;border:1px solid #333;"></div>
<div style="left:427px;top:367px;width:558px;height:25px;background:#333;"></div>
<span class="t" style="left:438px;top:372.5px;height:16px;line-height:16px;font-size:12px;color:#fff;font-weight:bold;letter-spacing:0.67px;">50 - STATIC ROUTING</span>
<span class="t" style="left:438px;top:414px;height:16px;line-height:16px;font-size:12px;color:#000;letter-spacing:0.16px;">Remaining number of rules that can be created:</span>
<span class="t" style="left:702px;top:414px;height:16px;line-height:16px;font-size:12px;color:#c0202a;letter-spacing:-0.18px;">49</span>
<div style="left:440px;top:452px;width:522px;height:430px;background:#fff;border:1px solid #e4e4e4;"></div>
<div style="left:442px;top:454px;width:22px;height:18px;background:#dfdfdf;box-shadow:0 0 0 1px #fff,0 0 0 2px #e9e9e9;"></div>
<div style="left:468px;top:454px;width:135px;height:18px;background:#dfdfdf;box-shadow:0 0 0 1px #fff,0 0 0 2px #e9e9e9;"></div>
<span class="t" style="left:512.0px;top:455px;height:16px;line-height:16px;font-size:12px;color:#000;letter-spacing:0.03px;">Interface</span>
<div style="left:607px;top:454px;width:115px;height:18px;background:#dfdfdf;box-shadow:0 0 0 1px #fff,0 0 0 2px #e9e9e9;"></div>
<span class="t" style="left:633.5px;top:455px;height:16px;line-height:16px;font-size:12px;color:#000;letter-spacing:0.18px;">Destination</span>
<div style="left:726px;top:454px;width:115px;height:18px;background:#dfdfdf;box-shadow:0 0 0 1px #fff,0 0 0 2px #e9e9e9;"></div>
<span class="t" style="left:748.0px;top:455px;height:16px;line-height:16px;font-size:12px;color:#000;letter-spacing:0.09px;">Subnet Mask</span>
<div style="left:845px;top:454px;width:115px;height:18px;background:#dfdfdf;box-shadow:0 0 0 1px #fff,0 0 0 2px #e9e9e9;"></div>
<span class="t" style="left:879.0px;top:455px;height:16px;line-height:16px;font-size:12px;color:#000;letter-spacing:-0.05px;">Gateway</span>
<div style="left:442px;top:475px;width:22px;height:26px;background:#dfdfdf;box-shadow:0 0 0 1px #fff,0 0 0 2px #e9e9e9;"></div>
<div style="left:468px;top:475px;width:135px;height:26px;background:#dfdfdf;box-shadow:0 0 0 1px #fff,0 0 0 2px #e9e9e9;"></div>
<div style="left:607px;top:475px;width:115px;height:26px;background:#dfdfdf;box-shadow:0 0 0 1px #fff,0 0 0 2px #e9e9e9;"></div>
<div style="left:726px;top:475px;width:115px;height:26px;background:#dfdfdf;box-shadow:0 0 0 1px #fff,0 0 0 2px #e9e9e9;"></div>
<div style="left:845px;top:475px;width:115px;height:26px;background:#dfdfdf;box-shadow:0 0 0 1px #fff,0 0 0 2px #e9e9e9;"></div>
<div style="left:447px;top:482px;width:13px;height:13px;background:linear-gradient(135deg,#d8d8d8,#fff 70%);border:1px solid #8e8f8f;box-shadow:inset 0 0 0 1px #f4f4f4, inset 0 0 0 2px #c4c4c4;"></div>
<div style="left:471px;top:479px;width:127px;height:19px;background:#fff;border:1px solid #ececec;"></div>
<span class="t" style="left:476px;top:480px;height:16px;line-height:16px;font-size:11px;color:#000;letter-spacing:0.00px;">WAN (10.5.11.240)</span>
<svg style="left:586px;top:486.5px" width="7" height="4" viewBox="0 0 7 4"><polygon points="0,0 7,0 3.5,4" fill="#000"/></svg>
<div style="left:609px;top:478px;width:110px;height:20px;background:#fff;border:1px solid #e6e6e6;border-top-color:#b0b0b0;border-radius:2px;box-shadow:0 0 0 1px #e9e9e9;"></div>
<div style="left:728px;top:478px;width:110px;height:20px;background:#fff;border:1px solid #e6e6e6;border-top-color:#b0b0b0;border-radius:2px;box-shadow:0 0 0 1px #e9e9e9;"></div>
<div style="left:847px;top:478px;width:110px;height:20px;background:#fff;border:1px solid #e6e6e6;border-top-color:#b0b0b0;border-radius:2px;box-shadow:0 0 0 1px #e9e9e9;"></div>
<div style="left:442px;top:504px;width:22px;height:26px;background:#dfdfdf;box-shadow:0 0 0 1px #fff,0 0 0 2px #e9e9e9;"></div>
<div style="left:468px;top:504px;width:135px;height:26px;background:#dfdfdf;box-shadow:0 0 0 1px #fff,0 0 0 2px #e9e9e9;"></div>
<div style="left:607px;top:504px;width:115px;height:26px;background:#dfdfdf;box-shadow:0 0 0 1px #fff,0 0 0 2px #e9e9e9;"></div>
<div style="left:726px;top:504px;width:115px;height:26px;background:#dfdfdf;box-shadow:0 0 0 1px #fff,0 0 0 2px #e9e9e9;"></div>
<div style="left:845px;top:504px;width:115px;height:26px;background:#dfdfdf;box-shadow:0 0 0 1px #fff,0 0 0 2px #e9e9e9;"></div>
<div style="left:447px;top:511px;width:13px;height:13px;background:linear-gradient(135deg,#d8d8d8,#fff 70%);border:1px solid #8e8f8f;box-shadow:inset 0 0 0 1px #f4f4f4, inset 0 0 0 2px #c4c4c4;"></div>
<div style="left:471px;top:508px;width:127px;height:19px;background:#fff;border:1px solid #ececec;"></div>
<span class="t" style="left:476px;top:509px;height:16px;line-height:16px;font-size:11px;color:#000;letter-spacing:-0.05px;">WAN (172.23.0.239)</span>
<svg style="left:586px;top:515.5px" width="7" height="4" viewBox="0 0 7 4"><polygon points="0,0 7,0 3.5,4" fill="#000"/></svg>
<div style="left:609px;top:507px;width:110px;height:20px;background:#fff;border:1px solid #e6e6e6;border-top-color:#b0b0b0;border-radius:2px;box-shadow:0 0 0 1px #e9e9e9;"></div>
<div style="left:728px;top:507px;width:110px;height:20px;background:#fff;border:1px solid #e6e6e6;border-top-color:#b0b0b0;border-radius:2px;box-shadow:0 0 0 1px #e9e9e9;"></div>
<div style="left:847px;top:507px;width:110px;height:20px;background:#fff;border:1px solid #e6e6e6;border-top-color:#b0b0b0;border-radius:2px;box-shadow:0 0 0 1px #e9e9e9;"></div>
<div style="left:442px;top:533px;width:22px;height:26px;background:#dfdfdf;box-shadow:0 0 0 1px #fff,0 0 0 2px #e9e9e9;"></div>
<div style="left:468px;top:533px;width:135px;height:26px;background:#dfdfdf;box-shadow:0 0 0 1px #fff,0 0 0 2px #e9e9e9;"></div>
<div style="left:607px;top:533px;width:115px;height:26px;background:#dfdfdf;box-shadow:0 0 0 1px #fff,0 0 0 2px #e9e9e9;"></div>
<div style="left:726px;top:533px;width:115px;height:26px;background:#dfdfdf;box-shadow:0 0 0 1px #fff,0 0 0 2px #e9e9e9;"></div>
<div style="left:845px;top:533px;width:115px;height:26px;background:#dfdfdf;box-shadow:0 0 0 1px #fff,0 0 0 2px #e9e9e9;"></div>
<div style="left:447px;top:540px;width:13px;height:13px;background:linear-gradient(135deg,#d8d8d8,#fff 70%);border:1px solid #8e8f8f;box-shadow:inset 0 0 0 1px #f4f4f4, inset 0 0 0 2px #c4c4c4;"></div>
<div style="left:471px;top:537px;width:127px;height:19px;background:#fff;border:1px solid #ececec;"></div>
<span class="t" style="left:476px;top:538px;height:16px;line-height:16px;font-size:11px;color:#000;letter-spacing:-0.05px;">WAN (172.23.0.239)</span>
<svg style="left:586px;top:544.5px" width="7" height="4" viewBox="0 0 7 4"><polygon points="0,0 7,0 3.5,4" fill="#000"/></svg>
<div style="left:609px;top:536px;width:110px;height:20px;background:#fff;border:1px solid #e6e6e6;border-top-color:#b0b0b0;border-radius:2px;box-shadow:0 0 0 1px #e9e9e9;"></div>
<div style="left:728px;top:536px;width:110px;height:20px;background:#fff;border:1px solid #e6e6e6;border-top-color:#b0b0b0;border-radius:2px;box-shadow:0 0 0 1px #e9e9e9;"></div>
<div style="left:847px;top:536px;width:110px;height:20px;background:#fff;border:1px solid #e6e6e6;border-top-color:#b0b0b0;border-radius:2px;box-shadow:0 0 0 1px #e9e9e9;"></div>
<div style="left:442px;top:562px;width:22px;height:26px;background:#dfdfdf;box-shadow:0 0 0 1px #fff,0 0 0 2px #e9e9e9;"></div>
<div style="left:468px;top:562px;width:135px;height:26px;background:#dfdfdf;box-shadow:0 0 0 1px #fff,0 0 0 2px #e9e9e9;"></div>
<div style="left:607px;top:562px;width:115px;height:26px;background:#dfdfdf;box-shadow:0 0 0 1px #fff,0 0 0 2px #e9e9e9;"></div>
<div style="left:726px;top:562px;width:115px;height:26px;background:#dfdfdf;box-shadow:0 0 0 1px #fff,0 0 0 2px #e9e9e9;"></div>
<div style="left:845px;top:562px;width:115px;height:26px;background:#dfdfdf;box-shadow:0 0 0 1px #fff,0 0 0 2px #e9e9e9;"></div>
<div style="left:447px;top:569px;width:13px;height:13px;background:linear-gradient(135deg,#d8d8d8,#fff 70%);border:1px solid #8e8f8f;box-shadow:inset 0 0 0 1px #f4f4f4, inset 0 0 0 2px #c4c4c4;"></div>
<div style="left:471px;top:566px;width:127px;height:19px;background:#fff;border:1px solid #ececec;"></div>
<span class="t" style="left:476px;top:567px;height:16px;line-height:16px;font-size:11px;color:#000;letter-spacing:-0.05px;">WAN (172.23.0.239)</span>
<svg style="left:586px;top:573.5px" width="7" height="4" viewBox="0 0 7 4"><polygon points="0,0 7,0 3.5,4" fill="#000"/></svg>
<div style="left:609px;top:565px;width:110px;height:20px;background:#fff;border:1px solid #e6e6e6;border-top-color:#b0b0b0;border-radius:2px;box-shadow:0 0 0 1px #e9e9e9;"></div>
<div style="left:728px;top:565px;width:110px;height:20px;background:#fff;border:1px solid #e6e6e6;border-top-color:#b0b0b0;border-radius:2px;box-shadow:0 0 0 1px #e9e9e9;"></div>
<div style="left:847px;top:565px;width:110px;height:20px;background:#fff;border:1px solid #e6e6e6;border-top-color:#b0b0b0;border-radius:2px;box-shadow:0 0 0 1px #e9e9e9;"></div>
<div style="left:442px;top:591px;width:22px;height:26px;background:#dfdfdf;box-shadow:0 0 0 1px #fff,0 0 0 2px #e9e9e9;"></div>
<div style="left:468px;top:591px;width:135px;height:26px;background:#dfdfdf;box-shadow:0 0 0 1px #fff,0 0 0 2px #e9e9e9;"></div>
<div style="left:607px;top:591px;width:115px;height:26px;background:#dfdfdf;box-shadow:0 0 0 1px #fff,0 0 0 2px #e9e9e9;"></div>
<div style="left:726px;top:591px;width:115px;height:26px;background:#dfdfdf;box-shadow:0 0 0 1px #fff,0 0 0 2px #e9e9e9;"></div>
<div style="left:845px;top:591px;width:115px;height:26px;background:#dfdfdf;box-shadow:0 0 0 1px #fff,0 0 0 2px #e9e9e9;"></div>
<div style="left:447px;top:598px;width:13px;height:13px;background:linear-gradient(135deg,#d8d8d8,#fff 70%);border:1px solid #8e8f8f;box-shadow:inset 0 0 0 1px #f4f4f4, inset 0 0 0 2px #c4c4c4;"></div>
<div style="left:471px;top:595px;width:127px;height:19px;background:#fff;border:1px solid #ececec;"></div>
<span class="t" style="left:476px;top:596px;height:16px;line-height:16px;font-size:11px;color:#000;letter-spacing:-0.05px;">WAN (172.23.0.239)</span>
<svg style="left:586px;top:602.5px" width="7" height="4" viewBox="0 0 7 4"><polygon points="0,0 7,0 3.5,4" fill="#000"/></svg>
<div style="left:609px;top:594px;width:110px;height:20px;background:#fff;border:1px solid #e6e6e6;border-top-color:#b0b0b0;border-radius:2px;box-shadow:0 0 0 1px #e9e9e9;"></div>
<div style="left:728px;top:594px;width:110px;height:20px;background:#fff;border:1px solid #e6e6e6;border-top-color:#b0b0b0;border-radius:2px;box-shadow:0 0 0 1px #e9e9e9;"></div>
<div style="left:847px;top:594px;width:110px;height:20px;background:#fff;border:1px solid #e6e6e6;border-top-color:#b0b0b0;border-radius:2px;box-shadow:0 0 0 1px #e9e9e9;"></div>
<div style="left:442px;top:620px;width:22px;height:26px;background:#dfdfdf;box-shadow:0 0 0 1px #fff,0 0 0 2px #e9e9e9;"></div>
<div style="left:468px;top:620px;width:135px;height:26px;background:#dfdfdf;box-shadow:0 0 0 1px #fff,0 0 0 2px #e9e9e9;"></div>
<div style="left:607px;top:620px;width:115px;height:26px;background:#dfdfdf;box-shadow:0 0 0 1px #fff,0 0 0 2px #e9e9e9;"></div>
<div style="left:726px;top:620px;width:115px;height:26px;background:#dfdfdf;box-shadow:0 0 0 1px #fff,0 0 0 2px #e9e9e9;"></div>
<div style="left:845px;top:620px;width:115px;height:26px;background:#dfdfdf;box-shadow:0 0 0 1px #fff,0 0 0 2px #e9e9e9;"></div>
<div style="left:447px;top:627px;width:13px;height:13px;background:linear-gradient(135deg,#d8d8d8,#fff 70%);border:1px solid #8e8f8f;box-shadow:inset 0 0 0 1px #f4f4f4, inset 0 0 0 2px #c4c4c4;"></div>
<div style="left:471px;top:624px;width:127px;height:19px;background:#fff;border:1px solid #ececec;"></div>
<span class="t" style="left:476px;top:625px;height:16px;line-height:16px;font-size:11px;color:#000;letter-spacing:-0.05px;">WAN (172.23.0.239)</span>
<svg style="left:586px;top:631.5px" width="7" height="4" viewBox="0 0 7 4"><polygon points="0,0 7,0 3.5,4" fill="#000"/></svg>
<div style="left:609px;top:623px;width:110px;height:20px;background:#fff;border:1px solid #e6e6e6;border-top-color:#b0b0b0;border-radius:2px;box-shadow:0 0 0 1px #e9e9e9;"></div>
<div style="left:728px;top:623px;width:110px;height:20px;background:#fff;border:1px solid #e6e6e6;border-top-color:#b0b0b0;border-radius:2px;box-shadow:0 0 0 1px #e9e9e9;"></div>
<div style="left:847px;top:623px;width:110px;height:20px;background:#fff;border:1px solid #e6e6e6;border-top-color:#b0b0b0;border-radius:2px;box-shadow:0 0 0 1px #e9e9e9;"></div>
<div style="left:442px;top:649px;width:22px;height:26px;background:#dfdfdf;box-shadow:0 0 0 1px #fff,0 0 0 2px #e9e9e9;"></div>
<div style="left:468px;top:649px;width:135px;height:26px;background:#dfdfdf;box-shadow:0 0 0 1px #fff,0 0 0 2px #e9e9e9;"></div>
<div style="left:607px;top:649px;width:115px;height:26px;background:#dfdfdf;box-shadow:0 0 0 1px #fff,0 0 0 2px #e9e9e9;"></div>
<div style="left:726px;top:649px;width:115px;height:26px;background:#dfdfdf;box-shadow:0 0 0 1px #fff,0 0 0 2px #e9e9e9;"></div>
<div style="left:845px;top:649px;width:115px;height:26px;background:#dfdfdf;box-shadow:0 0 0 1px #fff,0 0 0 2px #e9e9e9;"></div>
<div style="left:447px;top:656px;width:13px;height:13px;background:linear-gradient(135deg,#d8d8d8,#fff 70%);border:1px solid #8e8f8f;box-shadow:inset 0 0 0 1px #f4f4f4, inset 0 0 0 2px #c4c4c4;"></div>
<div style="left:471px;top:653px;width:127px;height:19px;background:#fff;border:1px solid #ececec;"></div>
<span class="t" style="left:476px;top:654px;height:16px;line-height:16px;font-size:11px;color:#000;letter-spacing:-0.05px;">WAN (172.23.0.239)</span>
<svg style="left:586px;top:660.5px" width="7" height="4" viewBox="0 0 7 4"><polygon points="0,0 7,0 3.5,4" fill="#000"/></svg>
<div style="left:609px;top:652px;width:110px;height:20px;background:#fff;border:1px solid #e6e6e6;border-top-color:#b0b0b0;border-radius:2px;box-shadow:0 0 0 1px #e9e9e9;"></div>
<div style="left:728px;top:652px;width:110px;height:20px;background:#fff;border:1px solid #e6e6e6;border-top-color:#b0b0b0;border-radius:2px;box-shadow:0 0 0 1px #e9e9e9;"></div>
<div style="left:847px;top:652px;width:110px;height:20px;background:#fff;border:1px solid #e6e6e6;border-top-color:#b0b0b0;border-radius:2px;box-shadow:0 0 0 1px #e9e9e9;"></div>
<div style="left:442px;top:678px;width:22px;height:26px;background:#dfdfdf;box-shadow:0 0 0 1px #fff,0 0 0 2px #e9e9e9;"></div>
<div style="left:468px;top:678px;width:135px;height:26px;background:#dfdfdf;box-shadow:0 0 0 1px #fff,0 0 0 2px #e9e9e9;"></div>
<div style="left:607px;top:678px;width:115px;height:26px;background:#dfdfdf;box-shadow:0 0 0 1px #fff,0 0 0 2px #e9e9e9;"></div>
<div style="left:726px;top:678px;width:115px;height:26px;background:#dfdfdf;box-shadow:0 0 0 1px #fff,0 0 0 2px #e9e9e9;"></div>
<div style="left:845px;top:678px;width:115px;height:26px;background:#dfdfdf;box-shadow:0 0 0 1px #fff,0 0 0 2px #e9e9e9;"></div>
<div style="left:447px;top:685px;width:13px;height:13px;background:linear-gradient(135deg,#d8d8d8,#fff 70%);border:1px solid #8e8f8f;box-shadow:inset 0 0 0 1px #f4f4f4, inset 0 0 0 2px #c4c4c4;"></div>
<div style="left:471px;top:682px;width:127px;height:19px;background:#fff;border:1px solid #ececec;"></div>
<span class="t" style="left:476px;top:683px;height:16px;line-height:16px;font-size:11px;color:#000;letter-spacing:-0.05px;">WAN (172.23.0.239)</span>
<svg style="left:586px;top:689.5px" width="7" height="4" viewBox="0 0 7 4"><polygon points="0,0 7,0 3.5,4" fill="#000"/></svg>
<div style="left:609px;top:681px;width:110px;height:20px;background:#fff;border:1px solid #e6e6e6;border-top-color:#b0b0b0;border-radius:2px;box-shadow:0 0 0 1px #e9e9e9;"></div>
<div style="left:728px;top:681px;width:110px;height:20px;background:#fff;border:1px solid #e6e6e6;border-top-color:#b0b0b0;border-radius:2px;box-shadow:0 0 0 1px #e9e9e9;"></div>
<div style="left:847px;top:681px;width:110px;height:20px;background:#fff;border:1px solid #e6e6e6;border-top-color:#b0b0b0;border-radius:2px;box-shadow:0 0 0 1px #e9e9e9;"></div>
<div style="left:442px;top:707px;width:22px;height:26px;background:#dfdfdf;box-shadow:0 0 0 1px #fff,0 0 0 2px #e9e9e9;"></div>
<div style="left:468px;top:707px;width:135px;height:26px;background:#dfdfdf;box-shadow:0 0 0 1px #fff,0 0 0 2px #e9e9e9;"></div>
<div style="left:607px;top:707px;width:115px;height:26px;background:#dfdfdf;box-shadow:0 0 0 1px #fff,0 0 0 2px #e9e9e9;"></div>
<div style="left:726px;top:707px;width:115px;height:26px;background:#dfdfdf;box-shadow:0 0 0 1px #fff,0 0 0 2px #e9e9e9;"></div>
<div style="left:845px;top:707px;width:115px;height:26px;background:#dfdfdf;box-shadow:0 0 0 1px #fff,0 0 0 2px #e9e9e9;"></div>
<div style="left:447px;top:714px;width:13px;height:13px;background:linear-gradient(135deg,#d8d8d8,#fff 70%);border:1px solid #8e8f8f;box-shadow:inset 0 0 0 1px #f4f4f4, inset 0 0 0 2px #c4c4c4;"></div>
<div style="left:471px;top:711px;width:127px;height:19px;background:#fff;border:1px solid #ececec;"></div>
<span class="t" style="left:476px;top:712px;height:16px;line-height:16px;font-size:11px;color:#000;letter-spacing:-0.05px;">WAN (172.23.0.239)</span>
<svg style="left:586px;top:718.5px" width="7" height="4" viewBox="0 0 7 4"><polygon points="0,0 7,0 3.5,4" fill="#000"/></svg>
<div style="left:609px;top:710px;width:110px;height:20px;background:#fff;border:1px solid #e6e6e6;border-top-color:#b0b0b0;border-radius:2px;box-shadow:0 0 0 1px #e9e9e9;"></div>
<div style="left:728px;top:710px;width:110px;height:20px;background:#fff;border:1px solid #e6e6e6;border-top-color:#b0b0b0;border-radius:2px;box-shadow:0 0 0 1px #e9e9e9;"></div>
<div style="left:847px;top:710px;width:110px;height:20px;background:#fff;border:1px solid #e6e6e6;border-top-color:#b0b0b0;border-radius:2px;box-shadow:0 0 0 1px #e9e9e9;"></div>
<div style="left:442px;top:736px;width:22px;height:26px;background:#dfdfdf;box-shadow:0 0 0 1px #fff,0 0 0 2px #e9e9e9;"></div>
<div style="left:468px;top:736px;width:135px;height:26px;background:#dfdfdf;box-shadow:0 0 0 1px #fff,0 0 0 2px #e9e9e9;"></div>
<div style="left:607px;top:736px;width:115px;height:26px;background:#dfdfdf;box-shadow:0 0 0 1px #fff,0 0 0 2px #e9e9e9;"></div>
<div style="left:726px;top:736px;width:115px;height:26px;background:#dfdfdf;box-shadow:0 0 0 1px #fff,0 0 0 2px #e9e9e9;"></div>
<div style="left:845px;top:736px;width:115px;height:26px;background:#dfdfdf;box-shadow:0 0 0 1px #fff,0 0 0 2px #e9e9e9;"></div>
<div style="left:447px;top:743px;width:13px;height:13px;background:linear-gradient(135deg,#d8d8d8,#fff 70%);border:1px solid #8e8f8f;box-shadow:inset 0 0 0 1px #f4f4f4, inset 0 0 0 2px #c4c4c4;"></div>
<div style="left:471px;top:740px;width:127px;height:19px;background:#fff;border:1px solid #ececec;"></div>
<span class="t" style="left:476px;top:741px;height:16px;line-height:16px;font-size:11px;color:#000;letter-spacing:-0.05px;">WAN (172.23.0.239)</span>
<svg style="left:586px;top:747.5px" width="7" height="4" viewBox="0 0 7 4"><polygon points="0,0 7,0 3.5,4" fill="#000"/></svg>
<div style="left:609px;top:739px;width:110px;height:20px;background:#fff;border:1px solid #e6e6e6;border-top-color:#b0b0b0;border-radius:2px;box-shadow:0 0 0 1px #e9e9e9;"></div>
<div style="left:728px;top:739px;width:110px;height:20px;background:#fff;border:1px solid #e6e6e6;border-top-color:#b0b0b0;border-radius:2px;box-shadow:0 0 0 1px #e9e9e9;"></div>
<div style="left:847px;top:739px;width:110px;height:20px;background:#fff;border:1px solid #e6e6e6;border-top-color:#b0b0b0;border-radius:2px;box-shadow:0 0 0 1px #e9e9e9;"></div>
<div style="left:442px;top:765px;width:22px;height:26px;background:#dfdfdf;box-shadow:0 0 0 1px #fff,0 0 0 2px #e9e9e9;"></div>
<div style="left:468px;top:765px;width:135px;height:26px;background:#dfdfdf;box-shadow:0 0 0 1px #fff,0 0 0 2px #e9e9e9;"></div>
<div style="left:607px;top:765px;width:115px;height:26px;background:#dfdfdf;box-shadow:0 0 0 1px #fff,0 0 0 2px #e9e9e9;"></div>
<div style="left:726px;top:765px;width:115px;height:26px;background:#dfdfdf;box-shadow:0 0 0 1px #fff,0 0 0 2px #e9e9e9;"></div>
<div style="left:845px;top:765px;width:115px;height:26px;background:#dfdfdf;box-shadow:0 0 0 1px #fff,0 0 0 2px #e9e9e9;"></div>
<div style="left:447px;top:772px;width:13px;height:13px;background:linear-gradient(135deg,#d8d8d8,#fff 70%);border:1px solid #8e8f8f;box-shadow:inset 0 0 0 1px #f4f4f4, inset 0 0 0 2px #c4c4c4;"></div>
<div style="left:471px;top:769px;width:127px;height:19px;background:#fff;border:1px solid #ececec;"></div>
<span class="t" style="left:476px;top:770px;height:16px;line-height:16px;font-size:11px;color:#000;letter-spacing:-0.05px;">WAN (172.23.0.239)</span>
<svg style="left:586px;top:776.5px" width="7" height="4" viewBox="0 0 7 4"><polygon points="0,0 7,0 3.5,4" fill="#000"/></svg>
<div style="left:609px;top:768px;width:110px;height:20px;background:#fff;border:1px solid #e6e6e6;border-top-color:#b0b0b0;border-radius:2px;box-shadow:0 0 0 1px #e9e9e9;"></div>
<div style="left:728px;top:768px;width:110px;height:20px;background:#fff;border:1px solid #e6e6e6;border-top-color:#b0b0b0;border-radius:2px;box-shadow:0 0 0 1px #e9e9e9;"></div>
<div style="left:847px;top:768px;width:110px;height:20px;background:#fff;border:1px solid #e6e6e6;border-top-color:#b0b0b0;border-radius:2px;box-shadow:0 0 0 1px #e9e9e9;"></div>
<div style="left:442px;top:794px;width:22px;height:26px;background:#dfdfdf;box-shadow:0 0 0 1px #fff,0 0 0 2px #e9e9e9;"></div>
<div style="left:468px;top:794px;width:135px;height:26px;background:#dfdfdf;box-shadow:0 0 0 1px #fff,0 0 0 2px #e9e9e9;"></div>
<div style="left:607px;top:794px;width:115px;height:26px;background:#dfdfdf;box-shadow:0 0 0 1px #fff,0 0 0 2px #e9e9e9;"></div>
<div style="left:726px;top:794px;width:115px;height:26px;background:#dfdfdf;box-shadow:0 0 0 1px #fff,0 0 0 2px #e9e9e9;"></div>
<div style="left:845px;top:794px;width:115px;height:26px;background:#dfdfdf;box-shadow:0 0 0 1px #fff,0 0 0 2px #e9e9e9;"></div>
<div style="left:447px;top:801px;width:13px;height:13px;background:linear-gradient(135deg,#d8d8d8,#fff 70%);border:1px solid #8e8f8f;box-shadow:inset 0 0 0 1px #f4f4f4, inset 0 0 0 2px #c4c4c4;"></div>
<div style="left:471px;top:798px;width:127px;height:19px;background:#fff;border:1px solid #ececec;"></div>
<span class="t" style="left:476px;top:799px;height:16px;line-height:16px;font-size:11px;color:#000;letter-spacing:-0.05px;">WAN (172.23.0.239)</span>
<svg style="left:586px;top:805.5px" width="7" height="4" viewBox="0 0 7 4"><polygon points="0,0 7,0 3.5,4" fill="#000"/></svg>
<div style="left:609px;top:797px;width:110px;height:20px;background:#fff;border:1px solid #e6e6e6;border-top-color:#b0b0b0;border-radius:2px;box-shadow:0 0 0 1px #e9e9e9;"></div>
<div style="left:728px;top:797px;width:110px;height:20px;background:#fff;border:1px solid #e6e6e6;border-top-color:#b0b0b0;border-radius:2px;box-shadow:0 0 0 1px #e9e9e9;"></div>
<div style="left:847px;top:797px;width:110px;height:20px;background:#fff;border:1px solid #e6e6e6;border-top-color:#b0b0b0;border-radius:2px;box-shadow:0 0 0 1px #e9e9e9;"></div>
<div style="left:442px;top:823px;width:22px;height:26px;background:#dfdfdf;box-shadow:0 0 0 1px #fff,0 0 0 2px #e9e9e9;"></div>
<div style="left:468px;top:823px;width:135px;height:26px;background:#dfdfdf;box-shadow:0 0 0 1px #fff,0 0 0 2px #e9e9e9;"></div>
<div style="left:607px;top:823px;width:115px;height:26px;background:#dfdfdf;box-shadow:0 0 0 1px #fff,0 0 0 2px #e9e9e9;"></div>
<div style="left:726px;top:823px;width:115px;height:26px;background:#dfdfdf;box-shadow:0 0 0 1px #fff,0 0 0 2px #e9e9e9;"></div>
<div style="left:845px;top:823px;width:115px;height:26px;background:#dfdfdf;box-shadow:0 0 0 1px #fff,0 0 0 2px #e9e9e9;"></div>
<div style="left:447px;top:830px;width:13px;height:13px;background:linear-gradient(135deg,#d8d8d8,#fff 70%);border:1px solid #8e8f8f;box-shadow:inset 0 0 0 1px #f4f4f4, inset 0 0 0 2px #c4c4c4;"></div>
<div style="left:471px;top:827px;width:127px;height:19px;background:#fff;border:1px solid #ececec;"></div>
<span class="t" style="left:476px;top:828px;height:16px;line-height:16px;font-size:11px;color:#000;letter-spacing:-0.05px;">WAN (172.23.0.239)</span>
<svg style="left:586px;top:834.5px" width="7" height="4" viewBox="0 0 7 4"><polygon points="0,0 7,0 3.5,4" fill="#000"/></svg>
<div style="left:609px;top:826px;width:110px;height:20px;background:#fff;border:1px solid #e6e6e6;border-top-color:#b0b0b0;border-radius:2px;box-shadow:0 0 0 1px #e9e9e9;"></div>
<div style="left:728px;top:826px;width:110px;height:20px;background:#fff;border:1px solid #e6e6e6;border-top-color:#b0b0b0;border-radius:2px;box-shadow:0 0 0 1px #e9e9e9;"></div>
<div style="left:847px;top:826px;width:110px;height:20px;background:#fff;border:1px solid #e6e6e6;border-top-color:#b0b0b0;border-radius:2px;box-shadow:0 0 0 1px #e9e9e9;"></div>
<div style="left:442px;top:852px;width:22px;height:26px;background:#dfdfdf;box-shadow:0 0 0 1px #fff,0 0 0 2px #e9e9e9;"></div>
<div style="left:468px;top:852px;width:135px;height:26px;background:#dfdfdf;box-shadow:0 0 0 1px #fff,0 0 0 2px #e9e9e9;"></div>
<div style="left:607px;top:852px;width:115px;height:26px;background:#dfdfdf;box-shadow:0 0 0 1px #fff,0 0 0 2px #e9e9e9;"></div>
<div style="left:726px;top:852px;width:115px;height:26px;background:#dfdfdf;box-shadow:0 0 0 1px #fff,0 0 0 2px #e9e9e9;"></div>
<div style="left:845px;top:852px;width:115px;height:26px;background:#dfdfdf;box-shadow:0 0 0 1px #fff,0 0 0 2px #e9e9e9;"></div>
<div style="left:447px;top:859px;width:13px;height:13px;background:linear-gradient(135deg,#d8d8d8,#fff 70%);border:1px solid #8e8f8f;box-shadow:inset 0 0 0 1px #f4f4f4, inset 0 0 0 2px #c4c4c4;"></div>
<div style="left:471px;top:856px;width:127px;height:19px;background:#fff;border:1px solid #ececec;"></div>
<span class="t" style="left:476px;top:857px;height:16px;line-height:16px;font-size:11px;color:#000;letter-spacing:-0.05px;">WAN (172.23.0.239)</span>
<svg style="left:586px;top:863.5px" width="7" height="4" viewBox="0 0 7 4"><polygon points="0,0 7,0 3.5,4" fill="#000"/></svg>
<div style="left:609px;top:855px;width:110px;height:20px;background:#fff;border:1px solid #e6e6e6;border-top-color:#b0b0b0;border-radius:2px;box-shadow:0 0 0 1px #e9e9e9;"></div>
<div style="left:728px;top:855px;width:110px;height:20px;background:#fff;border:1px solid #e6e6e6;border-top-color:#b0b0b0;border-radius:2px;box-shadow:0 0 0 1px #e9e9e9;"></div>
<div style="left:847px;top:855px;width:110px;height:20px;background:#fff;border:1px solid #e6e6e6;border-top-color:#b0b0b0;border-radius:2px;box-shadow:0 0 0 1px #e9e9e9;"></div>
<svg style="left:448px;top:483px" width="11" height="11" viewBox="0 0 11 11"><path d="M2 4.500 L4.500 8.500 L9 1.500" stroke="#4a5a9a" stroke-width="2" fill="none"/></svg>
<div style="left:609px;top:478px;width:110px;height:20px;background:#fff;border:1px solid #b4c8dc;border-top-color:#7090b0;border-radius:2px;box-shadow:0 0 0 1px #d8e2ec, inset 0 0 0 1px #eef4fa;"></div>
<div style="left:612px;top:481px;width:1px;height:14px;background:#000;"></div>
<span class="t" style="left:731px;top:480px;height:16px;line-height:16px;font-size:11px;color:#000;letter-spacing:-0.10px;">255.255.252.0</span>
<span class="t" style="left:850px;top:480px;height:16px;line-height:16px;font-size:11px;color:#000;letter-spacing:-0.03px;">10.5.11.254</span>
<div style="left:991px;top:258px;width:137px;height:618px;background:#404343;"></div>
<span class="t" style="left:993px;top:259px;height:16px;line-height:16px;font-size:11px;color:#fff;font-weight:bold;letter-spacing:0.07px;">Helpful Hints..</span>
<span class="t" style="left:996px;top:295px;height:16px;line-height:16px;font-size:12px;color:#fff;letter-spacing:0.09px;">• Enable:</span>
<span class="t" style="left:993px;top:309.5px;height:16px;line-height:16px;font-size:12px;color:#fff;letter-spacing:0.11px;">Specifies whether the</span>
<span class="t" style="left:993px;top:324.5px;height:16px;line-height:16px;font-size:12px;color:#fff;letter-spacing:0.07px;">entry will be enabled or</span>
<span class="t" style="left:993px;top:339.5px;height:16px;line-height:16px;font-size:12px;color:#fff;letter-spacing:0.22px;">disabled.</span>
<span class="t" style="left:996px;top:376px;height:16px;line-height:16px;font-size:12px;color:#fff;letter-spacing:-0.05px;">• Interface:</span>
<span class="t" style="left:993px;top:390.5px;height:16px;line-height:16px;font-size:12px;color:#fff;letter-spacing:0.06px;">Specifies the interface --</span>
<span class="t" style="left:993px;top:405.5px;height:16px;line-height:16px;font-size:12px;color:#fff;letter-spacing:-0.04px;">WAN or WAN Physical --</span>
<span class="t" style="left:993px;top:420.5px;height:16px;line-height:16px;font-size:12px;color:#fff;letter-spacing:0.06px;">that the IP packet must</span>
<span class="t" style="left:993px;top:435.5px;height:16px;line-height:16px;font-size:12px;color:#fff;letter-spacing:0.04px;">use to transit out of the</span>
<span class="t" style="left:993px;top:450.5px;height:16px;line-height:16px;font-size:12px;color:#fff;letter-spacing:0.10px;">router, when this route</span>
<span class="t" style="left:993px;top:465.5px;height:16px;line-height:16px;font-size:12px;color:#fff;letter-spacing:0.21px;">is used.</span>
<span class="t" style="left:996px;top:502px;height:16px;line-height:16px;font-size:12px;color:#fff;letter-spacing:0.26px;">• Destination IP:</span>
<span class="t" style="left:993px;top:516.5px;height:16px;line-height:16px;font-size:12px;color:#fff;letter-spacing:0.15px;">The IP address of</span>
<span class="t" style="left:993px;top:531.5px;height:16px;line-height:16px;font-size:12px;color:#fff;letter-spacing:0.06px;">packets that will take</span>
<span class="t" style="left:993px;top:546.5px;height:16px;line-height:16px;font-size:12px;color:#fff;letter-spacing:0.03px;">this route.</span>
<span class="t" style="left:996px;top:583px;height:16px;line-height:16px;font-size:12px;color:#fff;letter-spacing:0.15px;">• Subnet Mask:</span>
<span class="t" style="left:993px;top:597.5px;height:16px;line-height:16px;font-size:12px;color:#fff;letter-spacing:0.18px;">One bits in the mask</span>
<span class="t" style="left:993px;top:612.5px;height:16px;line-height:16px;font-size:12px;color:#fff;letter-spacing:0.05px;">specify which bits of the</span>
<span class="t" style="left:993px;top:627.5px;height:16px;line-height:16px;font-size:12px;color:#fff;letter-spacing:0.19px;">IP address must match.</span>
<span class="t" style="left:996px;top:664px;height:16px;line-height:16px;font-size:12px;color:#fff;letter-spacing:0.18px;">• Gateway:</span>
<span class="t" style="left:993px;top:678.5px;height:16px;line-height:16px;font-size:12px;color:#fff;letter-spacing:0.02px;">Specifies the next hop to</span>
<span class="t" style="left:993px;top:693.5px;height:16px;line-height:16px;font-size:12px;color:#fff;letter-spacing:0.04px;">be taken if this route is</span>
<span class="t" style="left:993px;top:708.5px;height:16px;line-height:16px;font-size:12px;color:#fff;letter-spacing:0.07px;">used. A gateway of</span>
<span class="t" style="left:993px;top:723.5px;height:16px;line-height:16px;font-size:12px;color:#fff;letter-spacing:0.12px;">0.0.0.0 implies there is</span>
<span class="t" style="left:993px;top:738.5px;height:16px;line-height:16px;font-size:12px;color:#fff;letter-spacing:-0.09px;">no next hop, and the IP</span>
<span class="t" style="left:993px;top:753.5px;height:16px;line-height:16px;font-size:12px;color:#fff;letter-spacing:0.22px;">address matched is</span>
<span class="t" style="left:993px;top:768.5px;height:16px;line-height:16px;font-size:12px;color:#fff;letter-spacing:-0.00px;">directly connected to the</span>
<span class="t" style="left:993px;top:783.5px;height:16px;line-height:16px;font-size:12px;color:#fff;letter-spacing:0.03px;">router on the interface</span>
<span class="t" style="left:993px;top:798.5px;height:16px;line-height:16px;font-size:12px;color:#fff;letter-spacing:-0.02px;">specified: WAN or WAN</span>
<span class="t" style="left:993px;top:813.5px;height:16px;line-height:16px;font-size:12px;color:#fff;letter-spacing:-0.00px;">Physical.</span>
<div style="left:1419px;top:221px;width:19px;height:654px;background:#f0f0f0;border-left:1px solid #e6e6e6;"></div>
<svg style="left:1425px;top:229px" width="8" height="4" viewBox="0 0 8 4"><polygon points="0,4 4,0 8,4" fill="#3c3c3c"/></svg>
<svg style="left:1425px;top:864px" width="8" height="4" viewBox="0 0 8 4"><polygon points="0,0 8,0 4,4" fill="#3c3c3c"/></svg>
<div style="left:1420px;top:277px;width:17px;height:200px;background:linear-gradient(to right,#f2f2f2 0,#ebebeb 45%,#d6d6d6 55%,#dcdcdc 100%);border:1px solid #989898;border-radius:3px;box-shadow:inset 0 0 0 1px rgba(255,255,255,.7);"></div>
<div style="left:1425px;top:373px;width:8px;height:1px;background:#7a7a7a;"></div>
<div style="left:1425px;top:375px;width:8px;height:1px;background:#7a7a7a;"></div>
<div style="left:1425px;top:377px;width:8px;height:1px;background:#7a7a7a;"></div>
<div style="left:1425px;top:379px;width:8px;height:1px;background:#7a7a7a;"></div>
<div style="left:0px;top:875px;width:1440px;height:25px;background:#f0eeee;border-top:2px solid #fff;"></div>
<div style="left:0px;top:877px;width:1440px;height:1px;background:#a4a4a4;"></div>
<div style="left:766px;top:879px;width:1px;height:20px;background:#dcdada;"></div>
<div style="left:767px;top:879px;width:1px;height:20px;background:#faf9f9;"></div>
<div style="left:792px;top:879px;width:1px;height:20px;background:#dcdada;"></div>
<div style="left:793px;top:879px;width:1px;height:20px;background:#faf9f9;"></div>
<div style="left:818px;top:879px;width:1px;height:20px;background:#dcdada;"></div>
<div style="left:819px;top:879px;width:1px;height:20px;background:#faf9f9;"></div>
<div style="left:844px;top:879px;width:1px;height:20px;background:#dcdada;"></div>
<div style="left:845px;top:879px;width:1px;height:20px;background:#faf9f9;"></div>
<div style="left:870px;top:879px;width:1px;height:20px;background:#dcdada;"></div>
<div style="left:871px;top:879px;width:1px;height:20px;background:#faf9f9;"></div>
<div style="left:896px;top:879px;width:1px;height:20px;background:#dcdada;"></div>
<div style="left:897px;top:879px;width:1px;height:20px;background:#faf9f9;"></div>
<div style="left:922px;top:879px;width:1px;height:20px;background:#dcdada;"></div>
<div style="left:923px;top:879px;width:1px;height:20px;background:#faf9f9;"></div>
<div style="left:1331px;top:879px;width:1px;height:20px;background:#dcdada;"></div>
<div style="left:1332px;top:879px;width:1px;height:20px;background:#faf9f9;"></div>
<svg style="left:927px;top:881px" width="18" height="18" viewBox="0 0 18 18"><defs><radialGradient id="gs" cx=".35" cy=".3" r=".8"><stop offset="0" stop-color="#9ad0ff"/><stop offset=".5" stop-color="#2a78d8"/><stop offset="1" stop-color="#103a80"/></radialGradient></defs><circle cx="9" cy="9" r="8" fill="url(#gs)"/><path d="M5 3 q4 -1 6 2 q1 3 -2 4 q-3 0 -3 3 q-3 -2 -3 -5 q0 -3 2 -4z" fill="#4cae3c"/><path d="M12 9 q3 0 3 3 q-2 3 -4 2z" fill="#4cae3c"/></svg>
<span class="t" style="left:949px;top:882.5px;height:16px;line-height:16px;font-size:12.5px;color:#111;letter-spacing:0.19px;">Интернет | Защищенный режим: выкл.</span>
<svg style="left:1341px;top:881px" width="15" height="15" viewBox="0 0 15 15"><circle cx="6" cy="6" r="4.500" fill="#d8ecff" stroke="#3a78c8" stroke-width="1.500"/><path d="M9.500 9.500 L13 13.500" stroke="#8a7050" stroke-width="2.200" stroke-linecap="round"/><path d="M3.500 6 H8.500 M6 3.500 V8.500" stroke="#1a58b8" stroke-width="1.600"/></svg>
<span class="t" style="left:1357px;top:882.5px;height:16px;line-height:16px;font-size:12.5px;color:#111;letter-spacing:0.00px;">100%</span>
<svg style="left:1406px;top:889px" width="8" height="4" viewBox="0 0 8 4"><polygon points="0,0 8,0 4,4" fill="#222"/></svg>
<svg style="left:1426px;top:887px" width="12" height="12" viewBox="0 0 12 12"><g fill="#b8b8b8"><rect x="8" y="8" width="2" height="2"/><rect x="8" y="4" width="2" height="2"/><rect x="4" y="8" width="2" height="2"/><rect x="8" y="0" width="2" height="2"/><rect x="4" y="4" width="2" height="2"/><rect x="0" y="8" width="2" height="2"/></g></svg>
</body></html>
